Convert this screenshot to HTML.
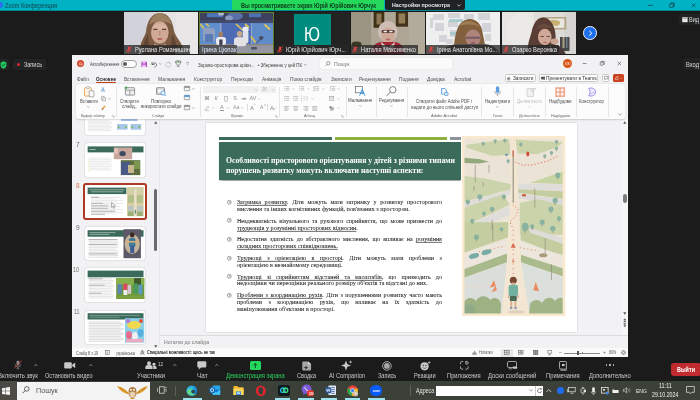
<!DOCTYPE html>
<html lang="uk">
<head>
<meta charset="utf-8">
<title>Zoom Конференция</title>
<style>
*{box-sizing:border-box;margin:0;padding:0}
html,body{width:700px;height:400px;overflow:hidden;background:#1b1b1b}
body{font-family:"Liberation Sans",sans-serif;color:#222;-webkit-font-smoothing:antialiased}
#root{position:absolute;left:-10px;top:-10px;width:720px;height:420px;overflow:hidden;background:#1b1b1b;filter:blur(.38px)}
#in{position:absolute;left:10px;top:10px;width:700px;height:400px}
.a{position:absolute}
.t{position:absolute;white-space:nowrap;line-height:1;transform-origin:0 0}
svg{position:absolute;overflow:visible}

/* zoom title bar */
#ztb{left:-10px;top:-10px;width:720px;height:20.8px;background:#00b2c3;box-shadow:inset 0 -.8px 0 rgba(0,60,70,.5)}
#zban{left:232.3px;top:-10px;width:152.2px;height:20.1px;background:#23d85a}
#zset{left:384.5px;top:-10px;width:80.5px;height:20px;background:#1f2326;border-radius:0 0 2px 2px}

/* video thumbs */
.vt{position:absolute;top:12px;height:42px;overflow:hidden;background:#222}
.vl{position:absolute;left:0;bottom:0;height:9px;background:rgba(30,30,30,.72);color:#e9e9e9;font-size:6.3px;line-height:9px;white-space:nowrap;padding:0 2px 0 2px}
.vl.m{padding-left:10px}
.mic{position:absolute;left:2.5px;bottom:1.5px;width:5px;height:6px}

/* powerpoint */
#ppt{left:72px;top:55px;width:556px;height:302px;background:#f2f1f3;overflow:hidden}
#ppt .t{color:#3a3a3a}
.tab{position:absolute;top:20.4px;font-size:5.6px;line-height:6px;color:#444;white-space:nowrap}
#rib{left:3.5px;top:29px;width:549.5px;height:35px;background:#fcfcfd;border-radius:2.5px;box-shadow:0 .5px 1.5px rgba(0,0,0,.22)}
.rl{position:absolute;font-size:4.6px;line-height:5.6px;color:#555;white-space:nowrap;text-align:center}
.gl{position:absolute;top:29.5px;font-size:4.1px;line-height:5px;color:#666;white-space:nowrap;text-align:center}
.sep{position:absolute;top:3px;width:.6px;height:29px;background:#dcdcdc}
.th{position:absolute;left:13px;width:60px;background:#fff;border-radius:1.5px;box-shadow:0 0 1.2px rgba(0,0,0,.4);overflow:hidden}
.sn{position:absolute;font-size:5.6px;line-height:6px;color:#555;text-align:right;width:10px;left:-1px}

/* slide */
#slide{left:134px;top:68px;width:371px;height:209px;background:#fff;box-shadow:0 0 1.5px rgba(0,0,0,.25);overflow:hidden}
#slide p{position:absolute;left:30.8px;width:205px;font-family:"Liberation Serif",serif;font-size:6.05px;line-height:6.9px;color:#333;text-align:justify}
#slide p u{text-decoration-thickness:.5px;text-underline-offset:.6px}
.bu{position:absolute;left:20.6px;width:4.2px;height:4.2px;border:.7px solid #666;border-radius:50%}
.bu:after{content:"";position:absolute;left:.7px;top:.5px;width:1.4px;height:1.4px;border-left:.5px solid #666;border-bottom:.5px solid #666}

.bl{font-family:"Liberation Serif",serif;font-size:6.05px;line-height:6.9px;color:#2e2e2e;white-space:nowrap;text-align:justify}
svg.tx{pointer-events:none}
svg.tx text{font-family:"Liberation Sans",sans-serif;white-space:pre}
/* zoom toolbar */
#ztool{left:0;top:357px;width:700px;height:24px;background:#1b1b1b}
.zl{position:absolute;top:16.2px;font-size:6.3px;line-height:7px;color:#d6d6d6;white-space:nowrap;transform:translateX(-50%)}
.car{position:absolute;top:5.5px;width:3.6px;height:3.6px;border-left:.8px solid #bdbdbd;border-top:.8px solid #bdbdbd;transform:rotate(45deg)}

/* taskbar */
#task{left:0;top:381px;width:700px;height:19px;background:#3b4038}
.run{position:absolute;top:17.4px;height:1.6px;background:#9fe3ee}
</style>
</head>
<body>
<div id="root"><div id="in">

<!-- Zoom title bar -->
<div class="a" id="ztb"></div>
<div class="a" style="left:-2.8px;top:2.2px;width:6.2px;height:6.2px;border-radius:50%;background:#2d6cf0"></div>
<svg class="a tx" style="left:4.6px;top:-4.50px" width="52" height="19.8"><text x="0" y="11.95" font-size="6.6" textLength="52" lengthAdjust="spacingAndGlyphs" style="fill:#123f46">Zoom Конференция</text></svg>
<div class="a" id="zban"></div>
<svg class="a tx" style="left:241px;top:-4.30px" width="135" height="19.2"><text x="0" y="11.58" font-size="6.4" textLength="135" lengthAdjust="spacingAndGlyphs" style="font-weight:bold;fill:#0f3d20">Вы просматриваете экран Юрій Юрійович Юрчук</text></svg>
<div class="a" id="zset"></div>
<svg class="a tx" style="left:391.6px;top:-4.00px" width="58" height="18.6"><text x="0" y="11.22" font-size="6.2" textLength="58" lengthAdjust="spacingAndGlyphs" style="font-weight:bold;fill:#e8e8e8">Настройки просмотра</text></svg>
<svg class="a" style="left:456.5px;top:3.6px" width="4" height="3" viewBox="0 0 4 3"><path d="M.4.6 2 2.2 3.6.6" fill="none" stroke="#ddd" stroke-width=".8"/></svg>
<svg class="a" style="left:646px;top:2px" width="52" height="7" viewBox="0 0 52 7"><g fill="none" stroke="#0e4a52" stroke-width=".8"><path d="M2 3.4h5"/><rect x="23.6" y="1.9" width="3.6" height="3.6" rx=".5"/><path d="M24.8 1.9V1h3.4v3.4h-1"/><path d="M45.8 1.6l3.6 3.6M49.4 1.6l-3.6 3.6"/></g></svg>


<svg width="0" height="0" style="position:absolute"><defs>
<filter id="b1" x="-20%" y="-20%" width="140%" height="140%"><feGaussianBlur stdDeviation=".6"/></filter>
<filter id="b2" x="-20%" y="-20%" width="140%" height="140%"><feGaussianBlur stdDeviation="0.55"/></filter>
<filter id="b3" x="-20%" y="-20%" width="140%" height="140%"><feGaussianBlur stdDeviation="2"/></filter>
<symbol id="mic" viewBox="0 0 6 7"><rect x="2" y=".5" width="2" height="3.700" rx="1" fill="#e2463e"/><path d="M.9 3.300a2.100 2.100 0 0 0 4.200 0M3 5.400v1.200" fill="none" stroke="#e2463e" stroke-width=".7"/><path d="M.5 6.500 5.500.5" stroke="#e2463e" stroke-width=".9"/></symbol>
</defs></svg>
<div class="vt" style="left:124.2px;width:74px;background:#dcdadc;"><svg width="74" height="42" viewBox="0 0 74 42"><rect width="74" height="42" fill="#d6d5dc"/><rect x="34" width="40" height="42" fill="#e5e3e5"/>
<g filter="url(#b1)"><rect x="0" y="0" width="22" height="42" fill="#d2d2da"/><rect x="52" y="0" width="22" height="42" fill="#e8e6e7"/>
<path d="M17 37c-2-6 3-10 5-17 1-10 5-19 14-19s13 9 14 18c2 7 8 11 9 18z" fill="#7a5a40"/>
<path d="M19 36c0-5 3-9 5-14l1 14zM53 36c0-5-3-9-5-14l-1 14z" fill="#5e4430"/>
<path d="M25 13c2-9 8-12 11-12s10 3 12 12c-6-5-17-5-23 0z" fill="#9c7e60"/>
<ellipse cx="35.800" cy="20.500" rx="8.800" ry="11.300" fill="#cfa896"/>
<ellipse cx="35.800" cy="15" rx="7" ry="3" fill="#d8b4a2"/>
<path d="M29.500 17.300h4M38 17.300h4" stroke="#5a4038" stroke-width="1.200"/>
<path d="M35.800 19v4.500" stroke="#b88c7c" stroke-width="1.200"/>
<ellipse cx="35.800" cy="27" rx="2.800" ry="1" fill="#b0605c"/>
<path d="M30 31c3 2.500 9 2.500 12 0v4H30z" fill="#b48c7c"/>
<path d="M18 43c2-7 8-9 17-9s15 2 17 9z" fill="#5c463c"/></g></svg><div class="a" style="left:0;bottom:0;height:9.200px;width:66.3px;background:rgba(40,40,40,.78)"></div><svg class="a" style="left:1.700px;top:33.700px" width="6" height="7" viewBox="0 0 6 7"><use href="#mic"/></svg><svg class="a tx" style="left:10.6px;top:28.30px" width="55" height="19.8"><text x="0" y="11.95" font-size="6.6" textLength="55" lengthAdjust="spacingAndGlyphs" style="fill:#e8e8e8">Руслана Романишин</text></svg></div>
<div class="vt" style="left:199.2px;width:75px;background:#456fb4;"><svg width="75" height="42" viewBox="0 0 75 42"><rect width="75" height="42" fill="#4672b6"/>
<g filter="url(#b2)"><rect x="0" y="0" width="75" height="10.800" fill="#252a48"/>
<rect x="8" y="1.200" width="16" height="4" fill="#3866b0"/><rect x="50" y="1.200" width="12" height="4" fill="#3b62aa"/><ellipse cx="36" cy="4" rx="8" ry="4" fill="#46609c"/><ellipse cx="30" cy="6" rx="4" ry="2.500" fill="#7f92bc"/><ellipse cx="22" cy="2" rx="3" ry="1.500" fill="#aab4cc"/>
<rect x="0" y="8.200" width="75" height="2.600" fill="#30365a"/>
<rect x="0" y="11.200" width="20.800" height="22" fill="#4e86ca"/><rect x="22.400" y="11.200" width="29.500" height="22" fill="#3a5cae"/><rect x="53" y="11.200" width="22" height="22" fill="#4f80c4"/><rect x="20.800" y="11.200" width="1.600" height="22" fill="#8a9ccc"/><rect x="51.900" y="11.200" width="1.100" height="22" fill="#8a9ccc"/>
<path d="M1 12l4 4.500M7 11.500l3 3M37 12l6.500 6M46 12l4 3.500M52 24.500l4.500 6M65.500 12.500l5.500 5" stroke="#e4c43a" stroke-width="1.700"/>
<rect x="4" y="16" width="12" height="14" rx="3" fill="#8799b8"/><rect x="6" y="22" width="8" height="8" fill="#4a6cb0"/>
<ellipse cx="46.500" cy="17.500" rx="3.200" ry="3" fill="#eef2f6"/><rect x="43.800" y="19" width="5.600" height="12" rx="1.500" fill="#e2e8f0"/>
<ellipse cx="62" cy="26" rx="2" ry="2" fill="#30344c"/><path d="M57 31 65 25" stroke="#3a3e58" stroke-width="1"/>
<rect x="0" y="32" width="75" height="10" fill="#857b75"/><rect x="36" y="33.500" width="39" height="8.500" fill="#8c8d98"/>
<ellipse cx="21.800" cy="22.400" rx="2.300" ry="2.800" fill="#9a7254"/><rect x="17" y="25" width="10" height="8" rx="2.500" fill="#eceef2"/><rect x="20.300" y="27.500" width="3.200" height="5.500" fill="#26283a"/>
<ellipse cx="40.600" cy="22" rx="2.800" ry="3" fill="#c8a27e"/><rect x="35" y="25.300" width="12.500" height="9" rx="3" fill="#e9e5e6"/>
<rect x="52" y="35" width="6" height="2.400" rx="1" fill="#343c58"/></g>
<rect width="75" height="42" fill="#c8d0e0" opacity=".14"/><rect x=".5" y=".5" width="74" height="41" fill="none" stroke="#657e2c" stroke-width="1"/></svg><div class="a" style="left:0;bottom:0;height:9.200px;width:38.2px;background:rgba(70,72,78,.8)"></div><svg class="a tx" style="left:2.4px;top:28.30px" width="34.5" height="19.8"><text x="0" y="11.95" font-size="6.6" textLength="34.5" lengthAdjust="spacingAndGlyphs" style="fill:#d8e2f4">Ірина Цюпак</text></svg></div>
<div class="vt" style="left:275.400px;width:74.600px;background:#232323"><div class="a" style="left:18.400px;top:2.400px;width:37.200px;height:30.600px;background:#008c7e"></div><svg class="a tx" style="left:28.9px;top:-8.90px" width="41.6" height="62.4"><text x="0" y="37.65" font-size="20.8" textLength="16" lengthAdjust="spacingAndGlyphs" style="fill:#fff">Ю</text></svg><div class="a" style="left:0;bottom:0;height:9.200px;width:74.6px;background:#262626"></div><svg class="a" style="left:1.700px;top:33.700px" width="6" height="7" viewBox="0 0 6 7"><use href="#mic"/></svg><svg class="a tx" style="left:10.6px;top:28.30px" width="60" height="19.8"><text x="0" y="11.95" font-size="6.6" textLength="60" lengthAdjust="spacingAndGlyphs" style="fill:#e8e8e8">Юрій Юрійович Юрч...</text></svg></div>
<div class="vt" style="left:350.8px;width:74.2px;background:#a89f8f;"><svg width="74.2" height="42" viewBox="0 0 74.2 42"><rect width="75" height="42" fill="#aea594"/>
<g filter="url(#b1)"><rect x="0" y="0" width="20" height="42" fill="#9c9483"/><rect x="58" y="0" width="17" height="42" fill="#b2aa9a"/>
<rect x="22.600" y="-1" width="10.700" height="16.800" fill="#3e3018"/><rect x="25.500" y="1.500" width="5" height="11" fill="#8c7652"/>
<rect x="44.800" y="-1" width="12.200" height="15.700" fill="#40321c"/><rect x="47.600" y="1.500" width="6.600" height="10" fill="#947e58"/>
<ellipse cx="36.700" cy="19.500" rx="9.800" ry="10.600" fill="#cdbdb4"/><ellipse cx="37" cy="23.600" rx="6.600" ry="8" fill="#cfa89a"/><ellipse cx="37" cy="27.500" rx="2.400" ry=".9" fill="#b46a68"/>
<rect x="30.600" y="18" width="13" height="3" rx="1.300" fill="#563c34"/><rect x="32.600" y="18.700" width="3.300" height="1.600" fill="#f2eeea"/><rect x="38.300" y="18.700" width="3.300" height="1.600" fill="#f2eeea"/>
<path d="M19 43c1-9 6-13 12-13h12c6 0 10 4 11 13z" fill="#a42832"/><path d="M30 30l7 5.500 7-5.500-2 8h-10z" fill="#dcd8d4"/>
<ellipse cx="5.500" cy="32" rx="5" ry="2.600" fill="#3a3822"/></g></svg><div class="a" style="left:0;bottom:0;height:9.200px;width:67px;background:rgba(40,40,40,.78)"></div><svg class="a" style="left:1.700px;top:33.700px" width="6" height="7" viewBox="0 0 6 7"><use href="#mic"/></svg><svg class="a tx" style="left:10.6px;top:28.30px" width="55" height="19.8"><text x="0" y="11.95" font-size="6.6" textLength="55" lengthAdjust="spacingAndGlyphs" style="fill:#e8e8e8">Наталія Максименко</text></svg></div>
<div class="vt" style="left:426.2px;width:74px;background:#ededee;"><svg width="74" height="42" viewBox="0 0 74 42"><rect width="74" height="42" fill="#efeff0"/>
<g filter="url(#b1)"><path d="M7 2h11v6H7zM22 1h12v5H22zM38 2h10v5H38zM52 1h12v7H52zM9 11h9v8H9zM22 9h10v6H22zM56 11h9v9h-9zM13 23h8v7h-8zM24 18h9v7h-9zM59 22h6v7h-6zM20 27h7v5h-7zM4 6h3v10H4z" fill="#bfc2c6" opacity=".6"/>
<path d="M23 7h14v3H23zM24 20h12v3H24z" fill="#9fc4c8" opacity=".8"/>
<path d="M28 36c0-7 1-12 3-18 2-7 7-11 13-11s11 5 12 11c1 6 3 11 3 18z" fill="#82603c"/>
<path d="M33 14c3-6 15-7 21 1-6-3-14-3-21-1z" fill="#a07e54"/>
<ellipse cx="47" cy="26" rx="7.600" ry="8.500" fill="#ad837c"/><rect x="39.500" y="24.800" width="15" height="2" rx="1" fill="#6a5460" opacity=".85"/><ellipse cx="47" cy="31" rx="2.400" ry=".9" fill="#9a5c60"/>
<path d="M14 43c2-8 12-11 20-11h24c7 0 14 4 16 11z" fill="#565250"/></g></svg><div class="a" style="left:0;bottom:0;height:9.200px;width:74px;background:rgba(40,40,40,.78)"></div><svg class="a" style="left:1.700px;top:33.700px" width="6" height="7" viewBox="0 0 6 7"><use href="#mic"/></svg><svg class="a tx" style="left:10.6px;top:28.30px" width="60" height="19.8"><text x="0" y="11.95" font-size="6.6" textLength="60" lengthAdjust="spacingAndGlyphs" style="fill:#e8e8e8">Ірина Анатоліївна Мо...</text></svg></div>
<div class="vt" style="left:501.8px;width:74px;background:#e0dedb;"><svg width="74" height="42" viewBox="0 0 74 42"><rect width="74" height="42" fill="#dedcd8"/>
<g filter="url(#b1)"><rect x="0" y="0" width="32" height="42" fill="#e8e6e3"/><ellipse cx="19" cy="18" rx="15" ry="17" fill="#eceae7"/><rect x="62" y="0" width="12" height="42" fill="#d6d4d0"/>
<rect x="40.300" y="5" width="24" height="12.500" fill="#b6a688"/><rect x="42.300" y="6.600" width="20" height="9.300" fill="#e8e6e0"/><path d="M47 9c2-1.500 7-1.500 10 0 2 1 1 4-2 5-3 0-5-2-8-3z" fill="#c8b070"/>
<rect x="58" y="25" width="9.500" height="14" fill="#46464a"/><rect x="60.500" y="25" width="2" height="11" fill="#a8a480"/><rect x="64" y="25" width="1.500" height="11" fill="#6c7c8c"/>
<path d="M26 36c0-7 3-12 4-18 2-8 6-12.500 11-12.500s9 4 11 10c2 5 2 12 1 18z" fill="#5a3e34"/>
<ellipse cx="42.800" cy="25" rx="6.800" ry="8.300" fill="#cfa898"/><path d="M38.500 24.500h3.400M44.500 24.500h3.400" stroke="#6a4a40" stroke-width="1"/><ellipse cx="43" cy="30.500" rx="2" ry=".8" fill="#b46c68"/><path d="M34 17c3-6 12-7 17-1-5 0-11 0-17 1z" fill="#684a3c"/>
<ellipse cx="52.500" cy="29.500" rx="4" ry="3" fill="#c9a292"/>
<path d="M20 43c2-7 8-10 14-10h18c6 0 10 4 12 10z" fill="#4a3838"/></g></svg><div class="a" style="left:0;bottom:0;height:9.200px;width:57px;background:rgba(40,40,40,.78)"></div><svg class="a" style="left:1.700px;top:33.700px" width="6" height="7" viewBox="0 0 6 7"><use href="#mic"/></svg><svg class="a tx" style="left:10.6px;top:28.30px" width="45" height="19.8"><text x="0" y="11.95" font-size="6.6" textLength="45" lengthAdjust="spacingAndGlyphs" style="fill:#e8e8e8">Озарко Вероніка</text></svg></div>
<div class="a" style="left:583.200px;top:26.300px;width:13.600px;height:13.600px;border-radius:50%;background:#1f70ee;border:1.100px solid #f4f4f4"></div>
<svg class="a" style="left:588px;top:30px" width="5" height="7" viewBox="0 0 5 7"><path d="M1.300.9 3.800 3.300 1.300 5.700" fill="none" stroke="#fff" stroke-width="1"/></svg>

<div class="a" style="left:-3px;top:58.6px;width:12.2px;height:11.6px;border-radius:2.5px;background:#232425"></div><!-- shieldbg -->
<!-- left: shield + record -->
<svg class="a" style="left:.2px;top:60.8px" width="7" height="8" viewBox="0 0 7 8"><path d="M3.5.3 6.4 1.4v2.8c0 1.7-1.2 2.9-2.9 3.5C1.800 7.100.6 5.900.6 4.200V1.400z" fill="#22c55e"/><path d="M2.100 3.900l1 1 1.800-2" fill="none" stroke="#0b3d1e" stroke-width=".8"/></svg>
<div class="a" style="left:13.2px;top:58.6px;width:32.6px;height:11.6px;border-radius:2.5px;background:#222324"></div>
<div class="a" style="left:16.6px;top:62.6px;width:3.8px;height:3.8px;border-radius:50%;background:#e2262c"></div>
<svg class="a tx" style="left:24.2px;top:55.00px" width="18" height="19.2"><text x="0" y="11.58" font-size="6.4" textLength="18" lengthAdjust="spacingAndGlyphs" style="fill:#dcdcdc">Запись</text></svg>
<!-- right: view + enter -->
<div class="a" style="left:678.5px;top:13.5px;width:24px;height:11.5px;border-radius:2px;background:#222324"></div>
<svg class="a" style="left:681.6px;top:16.8px" width="6" height="6" viewBox="0 0 6 6"><rect x=".2" y=".2" width="5.4" height="5" fill="#e8e8e8"/><path d="M.2 1.600h5.400M2 .2v1.400M3.800.2v1.400" stroke="#666" stroke-width=".4"/></svg>
<svg class="a tx" style="left:689px;top:10.00px" width="12.8" height="19.2"><text x="0" y="11.58" font-size="6.4" textLength="10" lengthAdjust="spacingAndGlyphs" style="fill:#dcdcdc">Вид</text></svg>
<div class="a" style="left:683px;top:58.4px;width:20px;height:12px;border-radius:2px;background:#212223"></div>
<svg class="a tx" style="left:686px;top:54.80px" width="13" height="19.2"><text x="0" y="11.58" font-size="6.4" textLength="13" lengthAdjust="spacingAndGlyphs" style="fill:#dcdcdc">Вход</text></svg>


<div class="a" id="ppt"><div class="a" style="left:-72px;top:-55px;width:700px;height:400px">
<div class="a" style="left:159.2px;top:119.5px;width:0.6px;height:228px;background:#e8e7e9;"></div>
<div class="a" style="left:84.6px;top:112px;width:60.5px;height:23px;background:#fff;border-radius:2px;box-shadow:0 0 1.3px rgba(0,0,0,.35)"></div>
<svg class="a" style="left:84.6px;top:112px;" width="60.5" height="23" viewBox="0 0 60.5 23"><rect x="36" y="6.400" width="16.500" height="2.600" fill="#a4c4e8"/><rect x="32" y="12" width="10.600" height="5.700" fill="#a8c6e6"/><rect x="45.600" y="12" width="10.600" height="5.700" fill="#a8c6e6"/><rect x="33" y="14" width="1.400" height="2" fill="#7ab850"/><rect x="40" y="14" width="1.400" height="2" fill="#7ab850"/><rect x="46.600" y="14" width="1.400" height="2" fill="#7ab850"/><rect x="53.600" y="14" width="1.400" height="2" fill="#7ab850"/><path d="M3 9h22.08" stroke="#dcdcdc" stroke-width="0.6"/><path d="M3 10.4h24" stroke="#dcdcdc" stroke-width="0.6"/><path d="M3 11.8h24" stroke="#dcdcdc" stroke-width="0.6"/><path d="M3 13.2h22.08" stroke="#dcdcdc" stroke-width="0.6"/><path d="M3 14.6h24" stroke="#dcdcdc" stroke-width="0.6"/><path d="M3 16h24" stroke="#dcdcdc" stroke-width="0.6"/><path d="M3 17.4h22.08" stroke="#dcdcdc" stroke-width="0.6"/><path d="M3 18.8h24" stroke="#dcdcdc" stroke-width="0.6"/></svg>
<svg class="a tx" style="left:75.8px;top:134.65px" width="13" height="19.5"><text x="0" y="11.77" font-size="6.5" style="fill:#6c6c6c">7</text></svg>
<div class="a" style="left:84.6px;top:142.6px;width:60.5px;height:34.7px;background:#fff;border-radius:2px;box-shadow:0 0 1.3px rgba(0,0,0,.35)"></div>
<svg class="a" style="left:84.6px;top:142.6px;" width="60.5" height="34.7" viewBox="0 0 60.5 34.7"><g filter="url(#b2)"><rect x="2.600" y="3.400" width="55.900" height="6" fill="#3b6b5b"/><rect x="28.800" y="4.500" width="18.400" height="11.700" fill="#c9a69c"/><ellipse cx="37.600" cy="10.500" rx="3.200" ry="2.600" fill="#3a4c60"/><ellipse cx="31" cy="8" rx="2" ry="3" fill="#e6c2b8"/><rect x="35.800" y="17.200" width="19.500" height="14.900" fill="#5b6e3c"/><rect x="36" y="19" width="9" height="13" fill="#4a5a86"/><rect x="43" y="22" width="6" height="8" fill="#c8b890"/><rect x="49" y="18" width="6" height="8" fill="#7a9650"/></g><path d="M5 15h20.24" stroke="#dadada" stroke-width="0.6"/><path d="M5 16.7h22" stroke="#dadada" stroke-width="0.6"/><path d="M5 18.4h22" stroke="#dadada" stroke-width="0.6"/><path d="M5 20.1h20.24" stroke="#dadada" stroke-width="0.6"/><path d="M5 21.8h22" stroke="#dadada" stroke-width="0.6"/><path d="M5 23.5h22" stroke="#dadada" stroke-width="0.6"/><path d="M5 25.2h20.24" stroke="#dadada" stroke-width="0.6"/><path d="M5 26.9h22" stroke="#dadada" stroke-width="0.6"/><path d="M4 15v14" stroke="#d8d8a0" stroke-width=".5"/><path d="M4.600 6.500h6" stroke="#cfe0d8" stroke-width=".7"/></svg>
<svg class="a tx" style="left:75.8px;top:176.25px" width="13" height="19.5"><text x="0" y="11.77" font-size="6.5" style="fill:#de7a58">8</text></svg>
<div class="a" style="left:83px;top:183.2px;width:64.2px;height:37.2px;background:#fff;border:2px solid #ad3a24;border-radius:3px"></div>
<svg class="a" style="left:84.6px;top:184.8px;" width="60.5" height="33.8" viewBox="0 0 60.5 33.8"><g filter="url(#b2)"><rect x="2.600" y="2.600" width="38.800" height="6.500" fill="#3b6b5b"/><rect x="42" y="2" width="16.700" height="29.200" fill="#d9cda4"/><rect x="43" y="3" width="14.700" height="5" fill="#cfd2a4"/><rect x="43" y="10" width="6" height="8" fill="#b4c08a"/><rect x="51" y="10" width="6.700" height="8" fill="#b4c08a"/><rect x="43" y="21" width="5.500" height="5" fill="#b9c4c4"/><rect x="52" y="21" width="5.700" height="5" fill="#b9c4c4"/><rect x="43" y="26.500" width="5.500" height="4.500" fill="#9aae78"/><rect x="52" y="26.500" width="5.700" height="4.500" fill="#9aae78"/><rect x="49.200" y="4" width="2.400" height="27" fill="#eadfc8"/><rect x="49.800" y="25" width="1.300" height="3.600" fill="#5f8f80"/></g><path d="M4.500 4.800h35M6 6.800h32" stroke="#c8dcd2" stroke-width=".6"/><path d="M6 12.3h29.44" stroke="#d4d4d4" stroke-width="0.6"/><path d="M6 15.3h32" stroke="#d4d4d4" stroke-width="0.6"/><path d="M6 18.3h32" stroke="#d4d4d4" stroke-width="0.6"/><path d="M6 21.3h29.44" stroke="#d4d4d4" stroke-width="0.6"/><path d="M6 24.3h32" stroke="#d4d4d4" stroke-width="0.6"/><path d="M6 27.3h32" stroke="#d4d4d4" stroke-width="0.6"/><path d="M6 13.8h23.92" stroke="#dadada" stroke-width="0.5"/><path d="M6 16.8h26" stroke="#dadada" stroke-width="0.5"/><path d="M6 19.8h26" stroke="#dadada" stroke-width="0.5"/><path d="M6 22.8h23.92" stroke="#dadada" stroke-width="0.5"/><path d="M6 25.8h26" stroke="#dadada" stroke-width="0.5"/><path d="M6 28.8h26" stroke="#dadada" stroke-width="0.5"/><path d="M6 12.300h8M6 18.300h12M6 20.800h17M6 23.300h17M6 26.300h24M6 29.300h14" stroke="#8a8a8a" stroke-width=".6"/><path d="M26.600 17.400v5l1.200-1 .9 1.900.8-.4-.9-1.800 1.600-.2z" fill="#fff" stroke="#444" stroke-width=".4"/></svg>
<svg class="a tx" style="left:75.8px;top:218.25px" width="13" height="19.5"><text x="0" y="11.77" font-size="6.5" style="fill:#6c6c6c">9</text></svg>
<div class="a" style="left:84.6px;top:226.5px;width:60.5px;height:33.8px;background:#fff;border-radius:2px;box-shadow:0 0 1.3px rgba(0,0,0,.35)"></div>
<svg class="a" style="left:84.6px;top:226.5px;" width="60.5" height="33.8" viewBox="0 0 60.5 33.8"><g filter="url(#b2)"><rect x="2.600" y="3.200" width="55.900" height="6.500" fill="#3b6b5b"/><rect x="38.500" y="2.200" width="17.400" height="29" fill="#5c5a66"/><ellipse cx="47.200" cy="17" rx="7.600" ry="10" fill="#c4b49c"/><rect x="44" y="11" width="6.400" height="9" rx="1.500" fill="#3f7a9a"/><ellipse cx="47.200" cy="8" rx="2.400" ry="2.400" fill="#3a2a22"/><rect x="45.200" y="19" width="4" height="7" fill="#3c5c98"/><rect x="40" y="14" width="14" height="1.600" fill="#d8b070"/></g><path d="M4.500 5.600h26M4.500 7.400h20" stroke="#c8dcd2" stroke-width=".6"/><path d="M3.6 12.6h27.6" stroke="#d0d0d0" stroke-width="0.6"/><path d="M3.6 14.2h30" stroke="#d0d0d0" stroke-width="0.6"/><path d="M3.6 15.8h30" stroke="#d0d0d0" stroke-width="0.6"/><path d="M3.6 17.4h27.6" stroke="#d0d0d0" stroke-width="0.6"/><path d="M3.6 19h30" stroke="#d0d0d0" stroke-width="0.6"/><path d="M3.6 20.6h30" stroke="#d0d0d0" stroke-width="0.6"/><path d="M3.6 22.2h27.6" stroke="#d0d0d0" stroke-width="0.6"/><path d="M3.6 23.8h30" stroke="#d0d0d0" stroke-width="0.6"/><path d="M3.6 25.4h30" stroke="#d0d0d0" stroke-width="0.6"/><path d="M3.6 27h27.6" stroke="#d0d0d0" stroke-width="0.6"/><path d="M3.6 28.6h30" stroke="#d0d0d0" stroke-width="0.6"/><path d="M3.6 30.2h30" stroke="#d0d0d0" stroke-width="0.6"/><path d="M3.600 12.600h29M3.600 17.400h29M3.600 26.900h29" stroke="#8c8c8c" stroke-width=".6"/></svg>
<svg class="a tx" style="left:73.2px;top:260.25px" width="13" height="19.5"><text x="0" y="11.77" font-size="6.5" textLength="6" lengthAdjust="spacingAndGlyphs" style="fill:#6c6c6c">10</text></svg>
<div class="a" style="left:84.6px;top:267.9px;width:60.5px;height:34.1px;background:#fff;border-radius:2px;box-shadow:0 0 1.3px rgba(0,0,0,.35)"></div>
<svg class="a" style="left:84.6px;top:267.9px;" width="60.5" height="34.1" viewBox="0 0 60.5 34.1"><g filter="url(#b2)"><rect x="2.600" y="2.600" width="55.900" height="6.700" fill="#3b6b5b"/><rect x="31.200" y="10.100" width="28.100" height="20.800" fill="#6d9a3c"/><rect x="31.200" y="10.100" width="28.100" height="7" fill="#86b04c"/><rect x="49" y="10.100" width="7" height="7" fill="#3f5c2c"/><rect x="32.500" y="16" width="4.400" height="10" rx="1" fill="#5c86b0"/><rect x="38.400" y="15.500" width="4" height="7" rx="1" fill="#e04860"/><rect x="38.400" y="22" width="4" height="5" fill="#f0f0f0"/><rect x="42.600" y="17" width="3.600" height="9" rx="1" fill="#d8c4d0"/><rect x="48.500" y="15.500" width="4.400" height="10" rx="1" fill="#4a9a5c"/><rect x="53.400" y="16.500" width="4" height="10" rx="1" fill="#5c98c0"/><rect x="31.200" y="27.500" width="28.100" height="3.400" fill="#7aa040"/></g><path d="M3.6 10.8h23" stroke="#d4d4d4" stroke-width="0.6"/><path d="M3.6 12.4h25" stroke="#d4d4d4" stroke-width="0.6"/><path d="M3.6 14h25" stroke="#d4d4d4" stroke-width="0.6"/><path d="M3.6 15.6h23" stroke="#d4d4d4" stroke-width="0.6"/><path d="M3.6 17.2h25" stroke="#d4d4d4" stroke-width="0.6"/><path d="M3.6 18.8h25" stroke="#d4d4d4" stroke-width="0.6"/><path d="M3.6 20.4h23" stroke="#d4d4d4" stroke-width="0.6"/><path d="M3.6 22h25" stroke="#d4d4d4" stroke-width="0.6"/><path d="M3.6 23.6h25" stroke="#d4d4d4" stroke-width="0.6"/><path d="M3.6 25.2h23" stroke="#d4d4d4" stroke-width="0.6"/><path d="M3.6 26.8h25" stroke="#d4d4d4" stroke-width="0.6"/><path d="M3.6 28.4h25" stroke="#d4d4d4" stroke-width="0.6"/><path d="M3.6 30h23" stroke="#d4d4d4" stroke-width="0.6"/><path d="M3.600 10.800h14M3.600 17.200h16M3.600 25.200h13" stroke="#8c8c8c" stroke-width=".6"/></svg>
<svg class="a tx" style="left:73.6px;top:301.65px" width="13" height="19.5"><text x="0" y="11.77" font-size="6.5" textLength="5.4" lengthAdjust="spacingAndGlyphs" style="fill:#6c6c6c">11</text></svg>
<div class="a" style="left:84.6px;top:310.5px;width:60.5px;height:33.5px;background:#fff;border-radius:2px;box-shadow:0 0 1.3px rgba(0,0,0,.35)"></div>
<svg class="a" style="left:84.6px;top:310.5px;" width="60.5" height="33.5" viewBox="0 0 60.5 33.5"><g filter="url(#b2)"><rect x="2.600" y="2.200" width="55.900" height="6.300" fill="#3b6b5b"/><rect x="40" y="7.200" width="19.200" height="24.400" fill="#8cd0e8"/><ellipse cx="49" cy="14" rx="7" ry="4" fill="#f0d850"/><ellipse cx="44" cy="24" rx="3" ry="4" fill="#e86c8c"/><ellipse cx="50" cy="25" rx="3" ry="4" fill="#f0f0f4"/><ellipse cx="55.500" cy="22" rx="3" ry="4" fill="#58b0e0"/><ellipse cx="43" cy="10" rx="2.400" ry="2" fill="#b080d8"/><ellipse cx="56" cy="10" rx="2" ry="2" fill="#e05040"/><rect x="41" y="28" width="17" height="3.200" fill="#f0a8c0"/></g><path d="M4.500 4.500h50M4.500 6.200h30" stroke="#a8c4b8" stroke-width=".5"/><path d="M3.6 11h32.2" stroke="#c4c4c4" stroke-width="0.6"/><path d="M3.6 12.6h35" stroke="#c4c4c4" stroke-width="0.6"/><path d="M3.6 14.2h35" stroke="#c4c4c4" stroke-width="0.6"/><path d="M3.6 15.8h32.2" stroke="#c4c4c4" stroke-width="0.6"/><path d="M3.6 17.4h35" stroke="#c4c4c4" stroke-width="0.6"/><path d="M3.6 19h35" stroke="#c4c4c4" stroke-width="0.6"/><path d="M3.6 20.6h32.2" stroke="#c4c4c4" stroke-width="0.6"/><path d="M3.6 22.2h35" stroke="#c4c4c4" stroke-width="0.6"/><path d="M3.6 23.8h35" stroke="#c4c4c4" stroke-width="0.6"/><path d="M3.6 25.4h32.2" stroke="#c4c4c4" stroke-width="0.6"/><path d="M3.6 27h35" stroke="#c4c4c4" stroke-width="0.6"/><path d="M3.6 28.6h35" stroke="#c4c4c4" stroke-width="0.6"/><path d="M3.6 30.2h32.2" stroke="#c4c4c4" stroke-width="0.6"/></svg>
<svg class="a" style="left:153.6px;top:120.8px;" width="3.6" height="3" viewBox="0 0 3.6 3"><path d="M1.800.3 3.400 2.700H.2z" fill="#555"/></svg>
<svg class="a" style="left:153.6px;top:344.6px;" width="3.6" height="3" viewBox="0 0 3.6 3"><path d="M1.800 2.700 3.400.3H.2z" fill="#555"/></svg>
<div class="a" style="left:153.9px;top:189.4px;width:3.3px;height:61.2px;background:#6c6c70;border-radius:1.700px"></div>
<div class="a" style="left:622px;top:119.5px;width:6px;height:215px;background:#f6f5f7;"></div>
<svg class="a" style="left:623.2px;top:121px;" width="3.6" height="3" viewBox="0 0 3.6 3"><path d="M1.800.3 3.400 2.700H.2z" fill="#555"/></svg>
<div class="a" style="left:623px;top:193.8px;width:4px;height:9.4px;background:#7c7c7c;border-radius:2px"></div>
<svg class="a" style="left:623.2px;top:312px;" width="3.6" height="3" viewBox="0 0 3.6 3"><path d="M1.800 2.700 3.400.3H.2z" fill="#555"/></svg>
<svg class="a" style="left:623.2px;top:317.6px;" width="3.6" height="4.6" viewBox="0 0 3.6 4.6"><path d="M1.800.3 3.400 2.200H.2zM1.800 2.300 3.400 4.300H.2z" fill="#666"/></svg>
<svg class="a" style="left:623.2px;top:323.2px;" width="3.6" height="4.6" viewBox="0 0 3.6 4.6"><path d="M1.800 2.300 3.400.3H.2zM1.800 4.300 3.400 2.300H.2z" fill="#666"/></svg>
<div class="a" style="left:160px;top:334.6px;width:468px;height:0.6px;background:#dddcde;"></div>
<svg class="a tx" style="left:164px;top:333.40px" width="45" height="17.4"><text x="0" y="10.50" font-size="5.8" textLength="45" lengthAdjust="spacingAndGlyphs" style="fill:#777">Нотатки до слайда</text></svg>
<div class="a" style="left:72px;top:348px;width:556px;height:9px;background:#fafafa;"></div>
<svg class="a tx" style="left:76.2px;top:345.75px" width="22" height="14.1"><text x="0" y="8.51" font-size="4.7" textLength="22" lengthAdjust="spacingAndGlyphs" style="fill:#555">Слайд 8 з 19</text></svg>
<svg class="a" style="left:105px;top:350.4px;" width="4.6" height="4.6" viewBox="0 0 4.6 4.6"><rect x=".3" y=".3" width="4" height="4" fill="none" stroke="#555" stroke-width=".5"/><path d="M2.300.3v3.200l-.9-.8M2.300 3.500l.9-.8" fill="none" stroke="#555" stroke-width=".4"/></svg>
<svg class="a tx" style="left:116px;top:345.75px" width="19" height="14.1"><text x="0" y="8.51" font-size="4.7" textLength="19" lengthAdjust="spacingAndGlyphs" style="fill:#555">українська</text></svg>
<svg class="a" style="left:140.2px;top:350.2px;" width="4.8" height="5" viewBox="0 0 4.8 5"><circle cx="2.400" cy=".9" r=".7" fill="none" stroke="#333" stroke-width=".4"/><path d="M.4 1.900h4M1.200 1.900v1.400h2.400V1.900M1.200 3.300l-.6 1.500M3.600 3.300l.6 1.500M2.400 3.300v1.300" fill="none" stroke="#333" stroke-width=".45"/></svg>
<svg class="a tx" style="left:147px;top:345.45px" width="68" height="14.7"><text x="0" y="8.87" font-size="4.9" textLength="68" lengthAdjust="spacingAndGlyphs" style="fill:#222;font-weight:bold">Спеціальні можливості: щось не так</text></svg>
<svg class="a" style="left:471.6px;top:350px;" width="5" height="5" viewBox="0 0 5 5"><path d="M.3 4.500h4.400M.7 4.500V2.900h3.600v1.600M1.400 2.900 2.500.9 3.600 2.900" fill="#aaa" stroke="#777" stroke-width=".4"/></svg>
<svg class="a tx" style="left:479px;top:345.90px" width="13.5" height="13.8"><text x="0" y="8.33" font-size="4.6" textLength="13.5" lengthAdjust="spacingAndGlyphs" style="fill:#555">Нотатки</text></svg>
<div class="a" style="left:500.5px;top:348.6px;width:12.6px;height:8px;background:#e6e5e7;"></div>
<svg class="a" style="left:503.8px;top:350.2px;" width="5.4" height="5" viewBox="0 0 5.4 5"><rect x=".3" y=".3" width="4.800" height="4.200" fill="none" stroke="#555" stroke-width=".5"/><path d="M.3 2.400h4.800M2.700.3v4.200" stroke="#555" stroke-width=".4"/></svg>
<svg class="a" style="left:518.2px;top:350.2px;" width="5.4" height="5" viewBox="0 0 5.4 5"><g fill="none" stroke="#555" stroke-width=".5"><rect x=".3" y=".4" width="2" height="1.700"/><rect x="3.100" y=".4" width="2" height="1.700"/><rect x=".3" y="2.800" width="2" height="1.700"/><rect x="3.100" y="2.800" width="2" height="1.700"/></g></svg>
<svg class="a" style="left:532.6px;top:350.2px;" width="5.4" height="5" viewBox="0 0 5.4 5"><rect x=".5" y=".3" width="4.400" height="4.400" fill="#999" stroke="#555" stroke-width=".5"/><path d="M2.700.3v4.400" stroke="#555" stroke-width=".4"/></svg>
<svg class="a" style="left:546.8px;top:350px;" width="5.4" height="5.4" viewBox="0 0 5.4 5.4"><path d="M.3.500h4.800M.8.500v2.800h3.800V.5M2.700 3.300v1.500M1.400 4.900h2.600" fill="none" stroke="#555" stroke-width=".5"/></svg>
<svg class="a tx" style="left:558.8px;top:345.10px" width="10" height="15"><text x="0" y="9.05" font-size="5" style="fill:#666">–</text></svg>
<div class="a" style="left:564px;top:352.6px;width:36px;height:0.5px;background:#888;"></div>
<div class="a" style="left:577.4px;top:350.6px;width:1.3px;height:4.4px;background:#555;"></div>
<div class="a" style="left:581.8px;top:351.8px;width:0.5px;height:1.7px;background:#888;"></div>
<svg class="a tx" style="left:602.6px;top:345.20px" width="10" height="15"><text x="0" y="9.05" font-size="5" style="fill:#666">+</text></svg>
<svg class="a tx" style="left:609px;top:346.00px" width="9.2" height="13.8"><text x="0" y="8.33" font-size="4.6" textLength="7.2" lengthAdjust="spacingAndGlyphs" style="fill:#555">80%</text></svg>
<svg class="a" style="left:621px;top:350.2px;" width="5" height="5" viewBox="0 0 5 5"><rect x="1" y="1" width="3" height="3" fill="none" stroke="#555" stroke-width=".5"/><path d="M2.500 0v1.400M2.500 3.600V5M0 2.500h1.400M3.600 2.500H5" stroke="#555" stroke-width=".5"/></svg>
<div class="a" style="left:206px;top:123px;width:371px;height:209px;background:#fff;box-shadow:0 0 1.2px rgba(0,0,0,.3)"></div>
<div class="a" style="left:219px;top:137px;width:113px;height:3.4px;background:#3b6b5b;"></div>
<div class="a" style="left:334.5px;top:137px;width:112.5px;height:3.4px;background:#8db13c;"></div>
<div class="a" style="left:449.5px;top:137px;width:11.5px;height:3.4px;background:#8c939e;"></div>
<div class="a" style="left:219px;top:142px;width:242px;height:38px;background:#3b6b5b;box-shadow:0 .6px 1px rgba(0,0,0,.35)"></div>
<svg class="a tx" style="left:226.3px;top:149.20px" width="229" height="22.8"><text x="0" y="13.76" font-size="7.6" textLength="229" lengthAdjust="spacingAndGlyphs" style="fill:#fff;font-weight:bold;font-family:'Liberation Serif',serif">Особливості просторового орієнтування у дітей з різними типами</text></svg>
<svg class="a tx" style="left:226.3px;top:158.70px" width="197.4" height="22.8"><text x="0" y="13.76" font-size="7.6" textLength="197.4" lengthAdjust="spacingAndGlyphs" style="fill:#fff;font-weight:bold;font-family:'Liberation Serif',serif">порушень розвитку можуть включати наступні аспекти:</text></svg>
<svg class="a" style="left:226.6px;top:199.9px;" width="4.6" height="4.6" viewBox="0 0 4.6 4.6"><circle cx="2.300" cy="2.300" r="1.900" fill="#fff" stroke="#555" stroke-width=".55"/><path d="M2.300 1.100v1.300h1" fill="none" stroke="#555" stroke-width=".45"/></svg>
<svg class="a tx" style="left:236.8px;top:193.12px" width="205" height="18.15"><text x="0" y="10.95" font-size="6.05" style="font-family:'Liberation Serif',serif;fill:#202020;stroke:#202020;stroke-width:.04px;word-spacing:2.149px"><tspan style="text-decoration:underline;text-decoration-thickness:.35px;text-underline-offset:.3px">Затримка розвитку</tspan>. Діти можуть мати затримку у розвитку просторового</text></svg>
<svg class="a tx" style="left:236.8px;top:200.03px" width="172.8" height="18.15"><text x="0" y="10.95" font-size="6.05" textLength="172.8" lengthAdjust="spacingAndGlyphs" style="font-family:'Liberation Serif',serif;fill:#202020;stroke:#202020;stroke-width:.04px">мислення та інших когнітивних функцій, пов'язаних з простором.</text></svg>
<svg class="a" style="left:226.6px;top:218.4px;" width="4.6" height="4.6" viewBox="0 0 4.6 4.6"><circle cx="2.300" cy="2.300" r="1.900" fill="#fff" stroke="#555" stroke-width=".55"/><path d="M2.300 1.100v1.300h1" fill="none" stroke="#555" stroke-width=".45"/></svg>
<svg class="a tx" style="left:236.8px;top:211.62px" width="205" height="18.15"><text x="0" y="10.95" font-size="6.05" style="font-family:'Liberation Serif',serif;fill:#202020;stroke:#202020;stroke-width:.04px;word-spacing:1.353px">Неадекватність візуального та рухового сприйняття, що може призвести до</text></svg>
<svg class="a tx" style="left:236.8px;top:218.53px" width="120.9" height="18.15"><text x="0" y="10.95" font-size="6.05" textLength="120.9" lengthAdjust="spacingAndGlyphs" style="font-family:'Liberation Serif',serif;fill:#202020;stroke:#202020;stroke-width:.04px"><tspan style="text-decoration:underline;text-decoration-thickness:.35px;text-underline-offset:.3px">труднощів у розумінні просторових відносин</tspan>.</text></svg>
<svg class="a" style="left:226.6px;top:237.1px;" width="4.6" height="4.6" viewBox="0 0 4.6 4.6"><circle cx="2.300" cy="2.300" r="1.900" fill="#fff" stroke="#555" stroke-width=".55"/><path d="M2.300 1.100v1.300h1" fill="none" stroke="#555" stroke-width=".45"/></svg>
<svg class="a tx" style="left:236.8px;top:230.33px" width="205" height="18.15"><text x="0" y="10.95" font-size="6.05" style="font-family:'Liberation Serif',serif;fill:#202020;stroke:#202020;stroke-width:.04px;word-spacing:1.646px">Недостатня здатність до абстрактного мислення, що впливає на <tspan style="text-decoration:underline;text-decoration-thickness:.35px;text-underline-offset:.3px">розуміння</tspan></text></svg>
<svg class="a tx" style="left:236.8px;top:237.23px" width="100.9" height="18.15"><text x="0" y="10.95" font-size="6.05" textLength="100.9" lengthAdjust="spacingAndGlyphs" style="font-family:'Liberation Serif',serif;fill:#202020;stroke:#202020;stroke-width:.04px"><tspan style="text-decoration:underline;text-decoration-thickness:.35px;text-underline-offset:.3px">складних просторових співвідношень.</tspan></text></svg>
<svg class="a" style="left:226.6px;top:255.6px;" width="4.6" height="4.6" viewBox="0 0 4.6 4.6"><circle cx="2.300" cy="2.300" r="1.900" fill="#fff" stroke="#555" stroke-width=".55"/><path d="M2.300 1.100v1.300h1" fill="none" stroke="#555" stroke-width=".45"/></svg>
<svg class="a tx" style="left:236.8px;top:248.82px" width="205" height="18.15"><text x="0" y="10.95" font-size="6.05" style="font-family:'Liberation Serif',serif;fill:#202020;stroke:#202020;stroke-width:.04px;word-spacing:3.988px"><tspan style="text-decoration:underline;text-decoration-thickness:.35px;text-underline-offset:.3px">Труднощі з орієнтацією в просторі</tspan>. Діти можуть мати проблеми з</text></svg>
<svg class="a tx" style="left:236.8px;top:255.73px" width="105.5" height="18.15"><text x="0" y="10.95" font-size="6.05" textLength="105.5" lengthAdjust="spacingAndGlyphs" style="font-family:'Liberation Serif',serif;fill:#202020;stroke:#202020;stroke-width:.04px">орієнтацією в незнайомому середовищі.</text></svg>
<svg class="a" style="left:226.6px;top:274.3px;" width="4.6" height="4.6" viewBox="0 0 4.6 4.6"><circle cx="2.300" cy="2.300" r="1.900" fill="#fff" stroke="#555" stroke-width=".55"/><path d="M2.300 1.100v1.300h1" fill="none" stroke="#555" stroke-width=".45"/></svg>
<svg class="a tx" style="left:236.8px;top:267.53px" width="205" height="18.15"><text x="0" y="10.95" font-size="6.05" style="font-family:'Liberation Serif',serif;fill:#202020;stroke:#202020;stroke-width:.04px;word-spacing:3.644px"><tspan style="text-decoration:underline;text-decoration-thickness:.35px;text-underline-offset:.3px">Труднощі зі сприйняттям відстаней та масштабів</tspan>, що призводить до</text></svg>
<svg class="a tx" style="left:236.8px;top:274.43px" width="190.7" height="18.15"><text x="0" y="10.95" font-size="6.05" textLength="190.7" lengthAdjust="spacingAndGlyphs" style="font-family:'Liberation Serif',serif;fill:#202020;stroke:#202020;stroke-width:.04px">недооцінки чи переоцінки реального розміру об'єктів та відстані до них.</text></svg>
<svg class="a" style="left:226.6px;top:292.9px;" width="4.6" height="4.6" viewBox="0 0 4.6 4.6"><circle cx="2.300" cy="2.300" r="1.900" fill="#fff" stroke="#555" stroke-width=".55"/><path d="M2.300 1.100v1.300h1" fill="none" stroke="#555" stroke-width=".45"/></svg>
<svg class="a tx" style="left:236.8px;top:286.12px" width="205" height="18.15"><text x="0" y="10.95" font-size="6.05" style="font-family:'Liberation Serif',serif;fill:#202020;stroke:#202020;stroke-width:.04px;word-spacing:0.953px"><tspan style="text-decoration:underline;text-decoration-thickness:.35px;text-underline-offset:.3px">Проблеми з координацією рухів</tspan>. Діти з порушеннями розвитку часто мають</text></svg>
<svg class="a tx" style="left:236.8px;top:293.03px" width="205" height="18.15"><text x="0" y="10.95" font-size="6.05" style="font-family:'Liberation Serif',serif;fill:#202020;stroke:#202020;stroke-width:.04px;word-spacing:4.967px">проблеми з координацією рухів, що впливає на їх здатність до</text></svg>
<svg class="a tx" style="left:236.8px;top:299.93px" width="97.7" height="18.15"><text x="0" y="10.95" font-size="6.05" textLength="97.7" lengthAdjust="spacingAndGlyphs" style="font-family:'Liberation Serif',serif;fill:#202020;stroke:#202020;stroke-width:.04px">маніпулювання об'єктами в просторі.</text></svg>
<svg class="a" style="left:461.8px;top:136.3px;" width="103.2" height="180" viewBox="0 0 103.2 180"><defs><filter id="wb" x="-5%" y="-5%" width="110%" height="110%"><feGaussianBlur stdDeviation=".55"/></filter><clipPath id="ic"><rect x="2" y="2" width="99.200" height="176"/></clipPath></defs>
<rect width="103.200" height="180" fill="#f9e9cf"/>
<g clip-path="url(#ic)"><g filter="url(#wb)"><rect x="2.5" y="2.5" width="98.2" height="175" fill="#ece4d6"/><path d="M4.5 8.8 47.0 3.2 48.8 18.8 30.8 20.0 4.5 11.8 z" fill="#cad3aa"/><path d="M53.2 3.8 101.2 6.2 94.5 11.8 75.8 18.0 55.8 17.5 z" fill="#cad3aa"/><path d="M2.0 13.8 30.8 20.8 75.8 18.8 102.0 8.8 102.0 33.8 68.2 45.0 2.0 38.8 z" fill="#ebe3d6"/><path d="M2.0 21.8 18.2 23.2 27.0 25.8 17.0 27.5 2.0 27.0 z" fill="#93a97c"/><path d="M2.0 40.0 23.2 42.5 48.8 48.2 48.8 53.2 2.0 65.8 z" fill="#cad3aa"/><path d="M68.2 46.8 102.0 35.0 102.0 48.2 z" fill="#c8d4a4"/><path d="M53.2 47.5 102.0 48.2 102.0 55.2 53.2 53.2 z" fill="#dfddd9"/><path d="M56.2 53.2 102.0 55.5 102.0 63.0 56.2 56.8 z" fill="#c3cda0"/><path d="M2.0 66.2 48.8 53.8 48.8 58.2 2.0 71.8 z" fill="#dfddd9"/><path d="M2.0 71.8 41.2 58.2 47.5 68.8 2.0 90.8 z" fill="#cad3aa"/><path d="M57.0 57.5 102.0 63.8 102.0 70.0 57.0 62.5 z" fill="#dcdad8"/><path d="M57.8 66.8 75.8 63.2 102.0 69.5 102.0 98.8 57.8 98.8 z" fill="#cad3aa"/><path d="M2.0 91.8 46.2 70.0 53.2 76.2 2.0 98.8 z" fill="#dfddd9"/><path d="M2.0 86.2 46.2 86.2 46.2 101.2 2.0 116.7 z" fill="#c3cda0"/><path d="M58.8 93.7 68.2 92.5 102.0 104.2 102.0 119.2 58.8 106.7 z" fill="#c3cda0"/><path d="M65.8 91.2 102.0 102.5 102.0 108.2 68.2 96.7 z" fill="#dedcd8"/><path d="M2.0 118.2 47.0 103.2 56.2 103.2 102.0 120.7 102.0 131.7 58.8 118.7 45.8 117.5 2.0 133.2 z" fill="#ece6dc"/><path d="M2.0 133.2 45.0 117.5 45.0 126.2 2.0 141.7 z" fill="#a8ba8c"/><path d="M58.8 118.7 102.0 132.7 102.0 140.7 58.8 126.2 z" fill="#aabc8e"/><path d="M2.0 142.2 45.0 126.7 40.0 179.9 2.0 179.9 z" fill="#d9dedb"/><path d="M59.2 126.7 102.0 141.7 102.0 179.9 67.8 179.9 z" fill="#dbe0dd"/><path d="M2.0 149.9 38.2 145.7 38.2 148.2 2.0 153.2 z" fill="#e2dcd0" opacity="0.6"/><path d="M47.8 3.2 53.8 3.2 55.8 47.5 57.2 98.8 46.8 98.8 48.8 47.5 z" fill="#f2e6d2"/><path d="M46.8 88.7 57.2 88.7 59.0 126.2 67.5 179.9 39.5 179.9 44.8 126.2 z" fill="#f3e7d3"/><path d="M2 166c3-5 9-5 12-1 3-6 11-6 14-1 4-4 10-2 11 4l-.5 11H2z" fill="#9db182"/><path d="M68 168c3-5 9-5 12-1 3-6 10-7 13-2 3-4 8-4 9-1v15H67z" fill="#a0b486"/><path d="M2 170c4-3 9-2 11 2l-1 7H2z" fill="#8faa86"/><path d="M51.2 15.0 51.2 66.8" fill="none" stroke="#7d766a" stroke-width="0.9"/><path d="M51.2 14.2 51.2 20.8" fill="none" stroke="#d9674e" stroke-width="1.1"/><path d="M13.2 28.8 13.2 46.2" fill="none" stroke="#8d8475" stroke-width="0.6"/><path d="M27.0 28.8 27.0 36.8" fill="none" stroke="#8d8475" stroke-width="0.6"/><path d="M12.0 50.0 12.0 55.0" fill="none" stroke="#8d8475" stroke-width="0.6"/><path d="M21.2 46.2 21.2 50.8" fill="none" stroke="#8d8475" stroke-width="0.6"/><path d="M72.8 52.5 72.8 71.8" fill="none" stroke="#8d8475" stroke-width="0.6"/><path d="M30.2 83.8 30.2 93.8" fill="none" stroke="#8d8475" stroke-width="0.6"/><path d="M30.8 88.7 30.8 105.0" fill="none" stroke="#8d8475" stroke-width="0.6"/><path d="M83.2 102.5 83.2 118.2" fill="none" stroke="#8d8475" stroke-width="0.6"/><path d="M89.5 128.2 89.5 144.2" fill="none" stroke="#8d8475" stroke-width="0.6"/><path d="M53.2 26.2 60.8 29.2 70.8 28.8 85.8 25.0 96.2 20.0" fill="none" stroke="#e0775c" stroke-width="1" stroke-dasharray="1.3 2"/><path d="M50.8 68.8 56.2 73.2 54.0 80.0 47.8 85.8 51.2 93.2" fill="none" stroke="#e0775c" stroke-width="1" stroke-dasharray="1.2 2.2"/><path d="M17.0 115.7 43.2 110.0" fill="none" stroke="#e0775c" stroke-width="0.8" stroke-dasharray="1.2 2.6"/><path d="M57.8 111.7 77.0 115.0" fill="none" stroke="#e0775c" stroke-width="0.8" stroke-dasharray="1.2 2.6"/><path d="M51.2 93.7 51.2 138.7" fill="none" stroke="#e0775c" stroke-width="0.8" stroke-dasharray="1.2 3.6"/><path d="M48.8 111.7 51.2 106.7 53.8 111.7 z" fill="#dc6a50"/><path d="M49.8 126.2 51.2 123.2 52.8 126.2 z" fill="#e08468"/><path d="M21.2 7.5v2.8" stroke="#8a7a66" stroke-width=".5"/><ellipse cx="21.2" cy="7.5" rx="1.7" ry="1.8" fill="#8ab2a0"/><path d="M33.2 5.0v2.8" stroke="#8a7a66" stroke-width=".5"/><ellipse cx="33.2" cy="5.0" rx="1.7" ry="1.8" fill="#8ab2a0"/><path d="M42.8 4.2v2.8" stroke="#8a7a66" stroke-width=".5"/><ellipse cx="42.8" cy="4.2" rx="1.7" ry="1.8" fill="#8ab2a0"/><path d="M58.8 8.2v2.8" stroke="#8a7a66" stroke-width=".5"/><ellipse cx="58.8" cy="8.2" rx="1.7" ry="1.8" fill="#8ab2a0"/><path d="M94.5 5.8v2.8" stroke="#8a7a66" stroke-width=".5"/><ellipse cx="94.5" cy="5.8" rx="1.7" ry="1.8" fill="#8ab2a0"/><path d="M94.5 12.5v2.8" stroke="#8a7a66" stroke-width=".5"/><ellipse cx="94.5" cy="12.5" rx="1.7" ry="1.8" fill="#8ab2a0"/><path d="M89.5 16.8v2.8" stroke="#8a7a66" stroke-width=".5"/><ellipse cx="89.5" cy="16.8" rx="1.7" ry="1.8" fill="#8ab2a0"/><path d="M82.8 20.0v2.8" stroke="#8a7a66" stroke-width=".5"/><ellipse cx="82.8" cy="20.0" rx="1.7" ry="1.8" fill="#8ab2a0"/><path d="M46.2 25.0v2.8" stroke="#8a7a66" stroke-width=".5"/><ellipse cx="46.2" cy="25.0" rx="1.7" ry="1.8" fill="#8ab2a0"/><path d="M95.8 39.2v4.5" stroke="#8a7a66" stroke-width=".5"/><ellipse cx="95.8" cy="39.2" rx="2.6" ry="2.8" fill="#8ab2a0"/><path d="M17.8 60.8v4.2" stroke="#8a7a66" stroke-width=".5"/><ellipse cx="17.8" cy="60.8" rx="2.5" ry="2.6" fill="#8ab2a0"/><path d="M5.8 65.8v3.9" stroke="#8a7a66" stroke-width=".5"/><ellipse cx="5.8" cy="65.8" rx="2.3" ry="2.4" fill="#8ab2a0"/><path d="M42.0 60.8v3.6" stroke="#8a7a66" stroke-width=".5"/><ellipse cx="42.0" cy="60.8" rx="2.1" ry="2.2" fill="#8ab2a0"/><path d="M30.2 73.2v3.9" stroke="#8a7a66" stroke-width=".5"/><ellipse cx="30.2" cy="73.2" rx="2.3" ry="2.4" fill="#8ab2a0"/><path d="M22.0 77.5v3.3" stroke="#8a7a66" stroke-width=".5"/><ellipse cx="22.0" cy="77.5" rx="1.9" ry="2.0" fill="#8ab2a0"/><path d="M10.2 85.0v3.6" stroke="#8a7a66" stroke-width=".5"/><ellipse cx="10.2" cy="85.0" rx="2.1" ry="2.2" fill="#8ab2a0"/><path d="M93.2 64.5v4.5" stroke="#8a7a66" stroke-width=".5"/><ellipse cx="93.2" cy="64.5" rx="2.6" ry="2.8" fill="#8ab2a0"/><path d="M89.0 73.2v4.2" stroke="#8a7a66" stroke-width=".5"/><ellipse cx="89.0" cy="73.2" rx="2.5" ry="2.6" fill="#8ab2a0"/><path d="M97.0 82.5v3.6" stroke="#8a7a66" stroke-width=".5"/><ellipse cx="97.0" cy="82.5" rx="2.1" ry="2.2" fill="#8ab2a0"/><path d="M80.2 86.2v4.2" stroke="#8a7a66" stroke-width=".5"/><ellipse cx="80.2" cy="86.2" rx="2.5" ry="2.6" fill="#8ab2a0"/><path d="M63.2 90.0v5.4" stroke="#8a7a66" stroke-width=".5"/><ellipse cx="63.2" cy="90.0" rx="3.2" ry="3.3" fill="#8ab2a0"/><path d="M70.2 90.8v3.3" stroke="#8a7a66" stroke-width=".5"/><ellipse cx="70.2" cy="90.8" rx="1.9" ry="2.0" fill="#8ab2a0"/><path d="M14.5 101.2v4.2" stroke="#8a7a66" stroke-width=".5"/><ellipse cx="14.5" cy="101.2" rx="2.5" ry="2.6" fill="#8ab2a0"/><path d="M39.5 93.2v3.3" stroke="#8a7a66" stroke-width=".5"/><ellipse cx="39.5" cy="93.2" rx="1.9" ry="2.0" fill="#8ab2a0"/><path d="M63.2 91.2v6.0" stroke="#8a7a66" stroke-width=".5"/><ellipse cx="63.2" cy="91.2" rx="3.5" ry="3.7" fill="#8ab2a0"/><path d="M90.8 92.5v4.5" stroke="#8a7a66" stroke-width=".5"/><ellipse cx="90.8" cy="92.5" rx="2.6" ry="2.8" fill="#8ab2a0"/><path d="M70.2 90.0v3.0" stroke="#8a7a66" stroke-width=".5"/><ellipse cx="70.2" cy="90.0" rx="1.8" ry="1.8" fill="#8ab2a0"/><ellipse cx="65.8" cy="18.0" rx="1.5" ry="2.4" fill="#d2493a"/><ellipse cx="44.5" cy="18.8" rx="1.600" ry="1.400" fill="#7aa0a8"/><ellipse cx="62.0" cy="59.2" rx="2.200" ry="1.300" fill="#c8643c"/><ellipse cx="12.0" cy="120.0" rx="5.200" ry="2.500" fill="#78aaa6" transform="rotate(-18 12.0 120.0)"/><ellipse cx="24.5" cy="116.2" rx="5.200" ry="2.500" fill="#78aaa6" transform="rotate(-18 24.5 116.2)"/><ellipse cx="81.2" cy="119.2" rx="4" ry="2" fill="#a89c80"/><path d="M27.8 151.7 32.0 144.2 33.8 149.9 z" fill="#ea8c5e"/><path d="M29.5 156.2 33.8 149.7 34.8 154.2 z" fill="#ea8c5e"/><path d="M71.2 154.2 73.8 145.7 77.0 155.2 z" fill="#ea8c5e"/><ellipse cx="54.3" cy="176" rx="8" ry="2" fill="#d8ccb8" opacity=".8"/><ellipse cx="51.3" cy="144.300" rx="3.500" ry="3.600" fill="#7a4a32"/><rect x="50.1" y="146.500" width="2.400" height="2.600" fill="#dcae94"/><rect x="46.6" y="148.800" width="9.400" height="11.400" rx="2.200" fill="#72b0a0"/><rect x="47.8" y="160" width="7" height="5" rx=".8" fill="#4a6c56"/><rect x="48.3" y="165" width="1.900" height="6.400" fill="#dcae94"/><rect x="52.4" y="165" width="1.900" height="6.400" fill="#dcae94"/><rect x="45.9" y="159" width="1.500" height="3" fill="#dcae94"/><rect x="55.2" y="159" width="1.500" height="3" fill="#dcae94"/><rect x="47.8" y="171.200" width="2.600" height="1.600" rx=".6" fill="#6a86a6"/><rect x="52.2" y="171.200" width="2.600" height="1.600" rx=".6" fill="#6a86a6"/></g></g>
<rect x="1.250" y="1.250" width="100.700" height="177.500" fill="none" stroke="#f9e9cf" stroke-width="2.500"/></svg>
<div class="a" style="left:76.8px;top:60.3px;width:7px;height:7px;border-radius:50%;background:#d2472a"></div>
<svg class="a" style="left:78.6px;top:62px" width="3.6" height="3.6" viewBox="0 0 3.6 3.6"><circle cx="1.5" cy="1.8" r="1.3" fill="none" stroke="#fbe3dc" stroke-width=".6"/><path d="M1.500 1.800h2v1.200a1.400 1.400 0 0 1-1.200.3z" fill="#f3b6a6"/></svg>
<svg class="a tx" style="left:89.6px;top:56.70px" width="29.3" height="15"><text x="0" y="9.05" font-size="5" textLength="29.3" lengthAdjust="spacingAndGlyphs" style="fill:#4a4a4a">Автозбереження</text></svg>
<div class="a" style="left:121.4px;top:60px;width:15.6px;height:7.6px;background:#fff;border:.6px solid #a4a4a4;border-radius:4px"></div>
<div class="a" style="left:123px;top:61.6px;width:4.4px;height:4.4px;background:#5a5a5a;border-radius:50%"></div>
<svg class="a" style="left:140.7px;top:60.8px" width="6.4" height="6.4" viewBox="0 0 6.4 6.4"><path d="M.4.9a.5.5 0 0 1 .5-.5h4.200l.9.9v4.200a.5.5 0 0 1-.5.5H.9a.5.5 0 0 1-.5-.5z" fill="#b247c4"/><rect x="1.500" y=".4" width="3" height="2" fill="#f0d8f4"/><rect x="1.300" y="3.700" width="3.600" height="2.300" fill="#e9c8ee"/></svg>
<svg class="a" style="left:150.8px;top:60.6px" width="6.5" height="6.5" viewBox="0 0 6.5 6.5"><path d="M1 1v2.500h2.500M1.200 3.300C2.400 1.500 5.400 1.500 5.600 3.800 5.600 5 4.800 5.600 3.400 6.200" fill="none" stroke="#555" stroke-width=".8"/></svg>
<svg class="a" style="left:158.9px;top:63.3px" width="2.8" height="1.8" viewBox="0 0 2.8 1.8"><path d="M.3.3 1.4 1.4 2.5.3" fill="none" stroke="#777" stroke-width=".55"/></svg>
<svg class="a" style="left:164.6px;top:60.6px" width="6.5" height="6.5" viewBox="0 0 6.5 6.5"><path d="M5.300 2.200A2.500 2.500 0 1 0 5.800 3.800" fill="none" stroke="#b0b0b0" stroke-width=".7"/><path d="M4 .6 5.500 2.300 3.800 2.900" fill="none" stroke="#b0b0b0" stroke-width=".6"/></svg>
<svg class="a" style="left:174.8px;top:60.4px" width="6.4" height="7" viewBox="0 0 6.4 7"><path d="M1.200.8h4v2.400a2 2 0 0 1-4 0zM3.200 5.200v1M1.800 6.400h2.800M1.200 1.500H.4v.8a1 1 0 0 0 .9.900M5.200 1.500h.8v.8a1 1 0 0 1-.9.900" fill="none" stroke="#666" stroke-width=".6"/><rect x="2.400" y="1.200" width="1.600" height="1.600" fill="#3a9a4a"/></svg>
<svg class="a" style="left:186.4px;top:62.4px" width="3.2" height="3" viewBox="0 0 3.2 3"><path d="M.3.400h2.600M.5 1.500 1.600 2.600 2.700 1.500" fill="none" stroke="#666" stroke-width=".5"/></svg>
<svg class="a tx" style="left:197.9px;top:55.70px" width="56.4" height="17.4"><text x="0" y="10.50" font-size="5.8" textLength="56.4" lengthAdjust="spacingAndGlyphs" style="fill:#3c3c3c">Зорово-просторова орієн...</text></svg>
<svg class="a tx" style="left:257.9px;top:55.70px" width="44" height="17.4"><text x="0" y="10.50" font-size="5.8" textLength="44" lengthAdjust="spacingAndGlyphs" style="fill:#3c3c3c">• Збережено у цей ПК</text></svg>
<svg class="a" style="left:304.2px;top:63.6px" width="2.8" height="1.8" viewBox="0 0 2.8 1.8"><path d="M.3.3 1.4 1.4 2.5.3" fill="none" stroke="#555" stroke-width=".55"/></svg>
<div class="a" style="left:319.7px;top:58.4px;width:132.5px;height:10.7px;background:#fbfbfc;border-radius:1.5px;box-shadow:0 0 .8px rgba(0,0,0,.3)"></div>
<svg class="a" style="left:324.6px;top:61px" width="5.5" height="5.5" viewBox="0 0 5.5 5.5"><circle cx="3.300" cy="2.200" r="1.700" fill="none" stroke="#666" stroke-width=".6"/><path d="M2.100 3.500.5 5.100" stroke="#666" stroke-width=".6"/></svg>
<svg class="a tx" style="left:334.3px;top:55.15px" width="15.4" height="17.7"><text x="0" y="10.68" font-size="5.9" textLength="15.4" lengthAdjust="spacingAndGlyphs" style="fill:#777">Пошук</text></svg>
<div class="a" style="left:562.8px;top:59.2px;width:9.2px;height:9.2px;background:#d8591c;border-radius:50%"></div>
<svg class="a tx" style="left:564.6px;top:58.40px" width="7.2" height="10.8"><text x="0" y="6.52" font-size="3.6" textLength="5.6" lengthAdjust="spacingAndGlyphs" style="fill:#fbe6da">ЮЮ</text></svg>
<svg class="a" style="left:580px;top:60px" width="44" height="8" viewBox="0 0 44 8"><g fill="none" stroke="#555" stroke-width=".65"><path d="M2.800 3.500h3.600"/><rect x="20.200" y="2.200" width="3" height="3" rx=".5"/><path d="M21.200 2.200v-.8h3v3h-.9"/><path d="M37.600 1.800l3.400 3.400M41 1.800l-3.400 3.400"/></g></svg>
<svg class="a tx" style="left:77.1px;top:69.65px" width="11.8" height="17.7"><text x="0" y="10.68" font-size="5.9" textLength="11.8" lengthAdjust="spacingAndGlyphs" style="fill:#505050">Файл</text></svg>
<svg class="a tx" style="left:96.4px;top:69.65px" width="20" height="17.7"><text x="0" y="10.68" font-size="5.9" textLength="20" lengthAdjust="spacingAndGlyphs" style="fill:#1e1e1e;font-weight:bold">Основне</text></svg>
<div class="a" style="left:96.4px;top:81.9px;width:20px;height:1px;background:#c43e1c;border-radius:.5px"></div>
<svg class="a tx" style="left:124px;top:69.65px" width="25.6" height="17.7"><text x="0" y="10.68" font-size="5.9" textLength="25.6" lengthAdjust="spacingAndGlyphs" style="fill:#505050">Вставлення</text></svg>
<svg class="a tx" style="left:157.9px;top:69.65px" width="27.1" height="17.7"><text x="0" y="10.68" font-size="5.9" textLength="27.1" lengthAdjust="spacingAndGlyphs" style="fill:#505050">Малювання</text></svg>
<svg class="a tx" style="left:193.9px;top:69.65px" width="28.2" height="17.7"><text x="0" y="10.68" font-size="5.9" textLength="28.2" lengthAdjust="spacingAndGlyphs" style="fill:#505050">Конструктор</text></svg>
<svg class="a tx" style="left:231px;top:69.65px" width="22.1" height="17.7"><text x="0" y="10.68" font-size="5.9" textLength="22.1" lengthAdjust="spacingAndGlyphs" style="fill:#505050">Переходи</text></svg>
<svg class="a tx" style="left:261.9px;top:69.65px" width="19.5" height="17.7"><text x="0" y="10.68" font-size="5.9" textLength="19.5" lengthAdjust="spacingAndGlyphs" style="fill:#505050">Анімація</text></svg>
<svg class="a tx" style="left:290.4px;top:69.65px" width="31.5" height="17.7"><text x="0" y="10.68" font-size="5.9" textLength="31.5" lengthAdjust="spacingAndGlyphs" style="fill:#505050">Показ слайдів</text></svg>
<svg class="a tx" style="left:331px;top:69.65px" width="20.7" height="17.7"><text x="0" y="10.68" font-size="5.9" textLength="20.7" lengthAdjust="spacingAndGlyphs" style="fill:#505050">Записати</text></svg>
<svg class="a tx" style="left:359.3px;top:69.65px" width="31.7" height="17.7"><text x="0" y="10.68" font-size="5.9" textLength="31.7" lengthAdjust="spacingAndGlyphs" style="fill:#505050">Рецензування</text></svg>
<svg class="a tx" style="left:399.3px;top:69.65px" width="19.6" height="17.7"><text x="0" y="10.68" font-size="5.9" textLength="19.6" lengthAdjust="spacingAndGlyphs" style="fill:#505050">Подання</text></svg>
<svg class="a tx" style="left:427.1px;top:69.65px" width="17.9" height="17.7"><text x="0" y="10.68" font-size="5.9" textLength="17.9" lengthAdjust="spacingAndGlyphs" style="fill:#505050">Довідка</text></svg>
<svg class="a tx" style="left:453.6px;top:69.65px" width="17.4" height="17.7"><text x="0" y="10.68" font-size="5.9" textLength="17.4" lengthAdjust="spacingAndGlyphs" style="fill:#505050">Acrobat</text></svg>
<div class="a" style="left:505.3px;top:74px;width:30.4px;height:8.4px;background:#fdfdfd;border:.6px solid #c8c8c8;border-radius:1.5px"></div>
<svg class="a" style="left:507.2px;top:76.5px" width="3.4" height="3.4" viewBox="0 0 3.4 3.4"><circle cx="1.700" cy="1.700" r="1.400" fill="none" stroke="#444" stroke-width=".5"/><circle cx="1.700" cy="1.700" r=".7" fill="#444"/></svg>
<svg class="a tx" style="left:512.9px;top:69.75px" width="20.5" height="17.1"><text x="0" y="10.32" font-size="5.7" textLength="20.5" lengthAdjust="spacingAndGlyphs" style="fill:#333">Записати</text></svg>
<div class="a" style="left:538.6px;top:74px;width:59.7px;height:8.4px;background:#fdfdfd;border:.6px solid #c8c8c8;border-radius:1.5px"></div>
<svg class="a" style="left:540.8px;top:76.2px" width="4.2" height="4" viewBox="0 0 4.2 4"><rect x=".2" y=".8" width="2.600" height="2.600" fill="#444"/><circle cx="3.200" cy="1.400" r=".8" fill="#555"/><rect x="2.600" y="2.200" width="1.400" height="1.500" fill="#555"/></svg>
<svg class="a tx" style="left:546.1px;top:69.75px" width="50.6" height="17.1"><text x="0" y="10.32" font-size="5.7" textLength="50.6" lengthAdjust="spacingAndGlyphs" style="fill:#333">Презентувати в Teams</text></svg>
<div class="a" style="left:601.9px;top:74px;width:7.6px;height:8.4px;background:#fdfdfd;border:.6px solid #c8c8c8;border-radius:1.5px"></div>
<svg class="a" style="left:603.5px;top:76.3px" width="4.4" height="4" viewBox="0 0 4.4 4"><path d="M.4.400h3.600v2.400H2l-.9.900v-.9H.4z" fill="none" stroke="#555" stroke-width=".5"/></svg>
<div class="a" style="left:612.9px;top:74px;width:11px;height:8.4px;background:#c8421f;border-radius:1.5px"></div>
<svg class="a" style="left:614.6px;top:76.2px" width="8" height="4.2" viewBox="0 0 8 4.2"><path d="M.5 3.600V1.800h1.100V.6h1.500v3z" fill="none" stroke="#fbe0d8" stroke-width=".5"/><path d="M5.400 1.800 6.200 2.600 7 1.800" fill="none" stroke="#fbe0d8" stroke-width=".5"/></svg>
<div class="a" style="left:75.5px;top:84px;width:549.6px;height:34.700px;background:#fcfcfd;border-radius:2.500px;box-shadow:0 .5px 1.600px rgba(0,0,0,.16)"></div>
<div class="a" style="left:116.4px;top:86.5px;width:0.6px;height:30px;background:#e6e6e6;"></div>
<div class="a" style="left:200px;top:86.5px;width:0.6px;height:30px;background:#e6e6e6;"></div>
<div class="a" style="left:279.3px;top:86.5px;width:0.6px;height:30px;background:#e6e6e6;"></div>
<div class="a" style="left:345.7px;top:86.5px;width:0.6px;height:30px;background:#e6e6e6;"></div>
<div class="a" style="left:375.7px;top:86.5px;width:0.6px;height:30px;background:#e6e6e6;"></div>
<div class="a" style="left:407.1px;top:86.5px;width:0.6px;height:30px;background:#e6e6e6;"></div>
<div class="a" style="left:481.4px;top:86.5px;width:0.6px;height:30px;background:#e6e6e6;"></div>
<div class="a" style="left:513.1px;top:86.5px;width:0.6px;height:30px;background:#e6e6e6;"></div>
<div class="a" style="left:545.4px;top:86.5px;width:0.6px;height:30px;background:#e6e6e6;"></div>
<div class="a" style="left:575.7px;top:86.5px;width:0.6px;height:30px;background:#e6e6e6;"></div>
<div class="a" style="left:607.6px;top:86.5px;width:0.6px;height:30px;background:#e6e6e6;"></div>
<svg class="a" style="left:84.3px;top:86.4px" width="11" height="11.2" viewBox="0 0 11 11.2"><rect x=".6" y="1.700" width="6.800" height="8.400" rx=".8" fill="#fdf4e6" stroke="#e8a24a" stroke-width=".9"/><rect x="2.400" y=".5" width="3.200" height="2" rx=".6" fill="#f6f6f6" stroke="#999" stroke-width=".5"/><rect x="5.200" y="4.800" width="4.800" height="6" rx=".5" fill="#fafafa" stroke="#8a8a8a" stroke-width=".7"/></svg>
<svg class="a tx" style="left:79.7px;top:93.95px" width="17.9" height="15.3"><text x="0" y="9.23" font-size="5.1" textLength="17.9" lengthAdjust="spacingAndGlyphs" style="fill:#4a4a4a">Вставити</text></svg>
<svg class="a" style="left:86.9px;top:106.1px" width="2.8" height="1.8" viewBox="0 0 2.8 1.8"><path d="M.3.3 1.4 1.4 2.5.3" fill="none" stroke="#777" stroke-width=".55"/></svg>
<svg class="a" style="left:101.4px;top:87.1px" width="4" height="4.6" viewBox="0 0 4 4.6"><path d="M1 .3 2.800 3.300M3 .3 1.200 3.300" stroke="#3a7bc8" stroke-width=".55" fill="none"/><circle cx=".9" cy="3.800" r=".6" fill="none" stroke="#3a7bc8" stroke-width=".5"/><circle cx="3.100" cy="3.800" r=".6" fill="none" stroke="#3a7bc8" stroke-width=".5"/></svg>
<svg class="a" style="left:100.8px;top:95.8px" width="5" height="5.4" viewBox="0 0 5 5.4"><rect x=".4" y=".4" width="2.800" height="3.600" rx=".4" fill="#fff" stroke="#888" stroke-width=".55"/><rect x="1.700" y="1.500" width="2.800" height="3.600" rx=".4" fill="#f2f2f2" stroke="#888" stroke-width=".55"/></svg>
<svg class="a" style="left:108.4px;top:97.7px" width="2.8" height="1.8" viewBox="0 0 2.8 1.8"><path d="M.3.3 1.4 1.4 2.5.3" fill="none" stroke="#777" stroke-width=".55"/></svg>
<svg class="a" style="left:101px;top:104.7px" width="5" height="5.2" viewBox="0 0 5 5.2"><path d="M3.400.400 4.700 1.600 3.400 3 2.200 1.800z" fill="#e8a24a"/><path d="M2.400 2.200.6 3.600 1.800 4.900 3.100 3z" fill="#c77a1c"/><path d="M.5 4.900h1.500" stroke="#888" stroke-width=".5"/></svg>
<svg class="a tx" style="left:81.1px;top:109.40px" width="23.9" height="13.2"><text x="0" y="7.96" font-size="4.4" textLength="23.9" lengthAdjust="spacingAndGlyphs" style="fill:#666">Буфер обміну</text></svg>
<svg class="a" style="left:112.4px;top:114.8px" width="2.6" height="2.6" viewBox="0 0 2.6 2.6"><path d="M.3.300h1.200M.3.300v1.200M.9.900l1.400 1.400M2.300 1.200v1.100H1.200" fill="none" stroke="#888" stroke-width=".4"/></svg>
<svg class="a" style="left:124px;top:86.4px" width="11.2" height="9.8" viewBox="0 0 11.2 9.8"><rect x="1.400" y="1.700" width="9.200" height="7.400" rx=".6" fill="#f1f1f1" stroke="#7d7d7d" stroke-width=".8"/><path d="M1.400 4.200h9.200M5.800 4.200v4.900" stroke="#7d7d7d" stroke-width=".7"/><path d="M2 .2v3.200M.4 1.800h3.200" stroke="#2f9e44" stroke-width=".8"/></svg>
<svg class="a tx" style="left:120px;top:93.65px" width="18.9" height="15.3"><text x="0" y="9.23" font-size="5.1" textLength="18.9" lengthAdjust="spacingAndGlyphs" style="fill:#4a4a4a">Створити</text></svg>
<svg class="a tx" style="left:121.7px;top:99.45px" width="12.6" height="15.3"><text x="0" y="9.23" font-size="5.1" textLength="12.6" lengthAdjust="spacingAndGlyphs" style="fill:#4a4a4a">слайд</text></svg>
<svg class="a" style="left:134.3px;top:106.5px" width="2.8" height="1.8" viewBox="0 0 2.8 1.8"><path d="M.3.3 1.4 1.4 2.5.3" fill="none" stroke="#777" stroke-width=".55"/></svg>
<svg class="a" style="left:156.1px;top:86.6px" width="10.6" height="10.4" viewBox="0 0 10.6 10.4"><rect x=".5" y=".7" width="8" height="6.600" rx=".5" fill="#ececec" stroke="#808080" stroke-width=".8"/><rect x="1.800" y="2" width="5.400" height="4" fill="#fff" stroke="#999" stroke-width=".4"/><circle cx="7" cy="6" r="2.200" fill="#e4f0fb" stroke="#3c8bd8" stroke-width=".7"/><path d="M8.600 7.600 10 9" stroke="#3c8bd8" stroke-width=".8"/></svg>
<svg class="a tx" style="left:151.1px;top:93.65px" width="20" height="15.3"><text x="0" y="9.23" font-size="5.1" textLength="20" lengthAdjust="spacingAndGlyphs" style="fill:#4a4a4a">Повторно</text></svg>
<svg class="a tx" style="left:141px;top:99.45px" width="40.4" height="15.3"><text x="0" y="9.23" font-size="5.1" textLength="40.4" lengthAdjust="spacingAndGlyphs" style="fill:#4a4a4a">використати слайди</text></svg>
<svg class="a" style="left:184px;top:86.1px" width="6" height="5.2" viewBox="0 0 6 5.2"><rect x=".3" y=".3" width="5.400" height="4.400" rx=".4" fill="#f4f4f4" stroke="#777" stroke-width=".6"/><rect x=".3" y=".3" width="5.400" height="1.500" fill="#8a8a8a"/></svg>
<svg class="a" style="left:192.1px;top:88px" width="2.8" height="1.8" viewBox="0 0 2.8 1.8"><path d="M.3.3 1.4 1.4 2.5.3" fill="none" stroke="#777" stroke-width=".55"/></svg>
<svg class="a" style="left:184px;top:95.4px" width="6" height="5.2" viewBox="0 0 6 5.2"><rect x=".3" y=".3" width="5.400" height="4.400" rx=".4" fill="#f4f4f4" stroke="#777" stroke-width=".6"/><rect x=".3" y=".3" width="5.400" height="1.500" fill="#3c8bd8"/></svg>
<svg class="a" style="left:184px;top:105.3px" width="6" height="5.2" viewBox="0 0 6 5.2"><rect x=".3" y=".3" width="5.400" height="4.400" rx=".4" fill="#f4f4f4" stroke="#777" stroke-width=".6"/><rect x=".3" y=".3" width="5.400" height="1.500" fill="#8a8a8a"/></svg>
<svg class="a" style="left:192.1px;top:107.2px" width="2.8" height="1.8" viewBox="0 0 2.8 1.8"><path d="M.3.3 1.4 1.4 2.5.3" fill="none" stroke="#777" stroke-width=".55"/></svg>
<svg class="a tx" style="left:152.1px;top:109.40px" width="12.2" height="13.2"><text x="0" y="7.96" font-size="4.4" textLength="12.2" lengthAdjust="spacingAndGlyphs" style="fill:#666">Слайди</text></svg>
<div class="a" style="left:203.3px;top:85.6px;width:56px;height:7.4px;background:#f0eff1;border-radius:1px"></div>
<svg class="a" style="left:254.6px;top:88.6px" width="2.8" height="1.8" viewBox="0 0 2.8 1.8"><path d="M.3.3 1.4 1.4 2.5.3" fill="none" stroke="#aaa" stroke-width=".55"/></svg>
<div class="a" style="left:260.3px;top:85.6px;width:16.1px;height:7.4px;background:#f0eff1;border-radius:1px"></div>
<svg class="a tx" style="left:262.3px;top:82.20px" width="9.6" height="14.4"><text x="0" y="8.69" font-size="4.8" textLength="4.6" lengthAdjust="spacingAndGlyphs" style="fill:#b0b0b0">28</text></svg>
<svg class="a" style="left:272.4px;top:88.6px" width="2.8" height="1.8" viewBox="0 0 2.8 1.8"><path d="M.3.3 1.4 1.4 2.5.3" fill="none" stroke="#aaa" stroke-width=".55"/></svg>
<svg class="a tx" style="left:207.4px;top:90.30px" width="10.8" height="16.2"><text x="0" y="9.77" font-size="5.4" text-anchor="middle" style="fill:#8a8a8a;font-weight:bold">Ж</text></svg>
<svg class="a tx" style="left:216.4px;top:90.30px" width="10.8" height="16.2"><text x="0" y="9.77" font-size="5.4" text-anchor="middle" style="fill:#8a8a8a;font-style:italic">К</text></svg>
<svg class="a tx" style="left:225.7px;top:90.30px" width="10.8" height="16.2"><text x="0" y="9.77" font-size="5.4" text-anchor="middle" style="fill:#8a8a8a;text-decoration:underline">П</text></svg>
<svg class="a tx" style="left:235px;top:90.30px" width="10.8" height="16.2"><text x="0" y="9.77" font-size="5.4" text-anchor="middle" style="fill:#8a8a8a">S</text></svg>
<svg class="a tx" style="left:243.6px;top:90.30px" width="10.8" height="16.2"><text x="0" y="9.77" font-size="5.4" text-anchor="middle" style="fill:#8a8a8a;text-decoration:line-through;font-size:4.300px">ab</text></svg>
<svg class="a tx" style="left:252.6px;top:90.30px" width="10.8" height="16.2"><text x="0" y="9.77" font-size="5.4" text-anchor="middle" style="fill:#8a8a8a">AV</text></svg>
<svg class="a" style="left:258.4px;top:97.7px" width="2.8" height="1.8" viewBox="0 0 2.8 1.8"><path d="M.3.3 1.4 1.4 2.5.3" fill="none" stroke="#aaa" stroke-width=".55"/></svg>
<svg class="a" style="left:204.2px;top:105px" width="6" height="6" viewBox="0 0 6 6"><path d="M1 3.800 3.800 1 5 2.200 2.200 5z" fill="none" stroke="#999" stroke-width=".5"/><path d="M.4 5.600h5" stroke="#bbb" stroke-width=".7"/></svg>
<svg class="a" style="left:211.8px;top:107.2px" width="2.8" height="1.8" viewBox="0 0 2.8 1.8"><path d="M.3.3 1.4 1.4 2.5.3" fill="none" stroke="#aaa" stroke-width=".55"/></svg>
<svg class="a tx" style="left:219.8px;top:99.10px" width="10.8" height="16.2"><text x="0" y="9.77" font-size="5.4" style="fill:#8a8a8a">A</text></svg>
<div class="a" style="left:219.6px;top:110.2px;width:4px;height:0.8px;background:#999;"></div>
<svg class="a" style="left:227px;top:107.2px" width="2.8" height="1.8" viewBox="0 0 2.8 1.8"><path d="M.3.3 1.4 1.4 2.5.3" fill="none" stroke="#aaa" stroke-width=".55"/></svg>
<svg class="a tx" style="left:233.4px;top:100.10px" width="10.4" height="15.6"><text x="0" y="9.41" font-size="5.2" style="fill:#9a9a9a">Aa</text></svg>
<svg class="a" style="left:241.4px;top:107.2px" width="2.8" height="1.8" viewBox="0 0 2.8 1.8"><path d="M.3.3 1.4 1.4 2.5.3" fill="none" stroke="#aaa" stroke-width=".55"/></svg>
<svg class="a tx" style="left:250.3px;top:99.00px" width="11.6" height="17.4"><text x="0" y="10.50" font-size="5.8" style="fill:#8a8a8a">A</text></svg>
<svg class="a tx" style="left:254.3px;top:101.10px" width="6" height="9"><text x="0" y="5.43" font-size="3" style="fill:#8a8a8a">^</text></svg>
<svg class="a tx" style="left:260.3px;top:100.40px" width="10" height="15"><text x="0" y="9.05" font-size="5" style="fill:#8a8a8a">A</text></svg>
<svg class="a tx" style="left:263.7px;top:101.10px" width="6" height="9"><text x="0" y="5.43" font-size="3" style="fill:#8a8a8a">˅</text></svg>
<svg class="a tx" style="left:269.5px;top:99.00px" width="11.6" height="17.4"><text x="0" y="10.50" font-size="5.8" style="fill:#8a8a8a">A</text></svg>
<svg class="a" style="left:272.5px;top:106.5px" width="3" height="3.6" viewBox="0 0 3 3.6"><path d="M.3 3.300 2.400.9" stroke="#8a8a8a" stroke-width=".6"/></svg>
<div class="a" style="left:247.2px;top:104.4px;width:0.5px;height:7px;background:#ddd;"></div>
<div class="a" style="left:266.7px;top:104.4px;width:0.5px;height:7px;background:#ddd;"></div>
<svg class="a tx" style="left:230.7px;top:109.40px" width="12.2" height="13.2"><text x="0" y="7.96" font-size="4.4" textLength="12.2" lengthAdjust="spacingAndGlyphs" style="fill:#666">Шрифт</text></svg>
<svg class="a" style="left:275.2px;top:114.8px" width="2.6" height="2.6" viewBox="0 0 2.6 2.6"><path d="M.3.300h1.200M.3.300v1.200M.9.900l1.400 1.400M2.300 1.200v1.100H1.200" fill="none" stroke="#888" stroke-width=".4"/></svg>
<svg class="a" style="left:283.7px;top:86.3px" width="5.4" height="4.8" viewBox="0 0 5.4 4.8"><circle cx=".6" cy="0.7" r=".45" fill="#8d8d8d"/><path d="M1.700 0.7h3.600" stroke="#8d8d8d" stroke-width=".5"/><circle cx=".6" cy="2.4" r=".45" fill="#8d8d8d"/><path d="M1.700 2.4h3.600" stroke="#8d8d8d" stroke-width=".5"/><circle cx=".6" cy="4.1" r=".45" fill="#8d8d8d"/><path d="M1.700 4.1h3.600" stroke="#8d8d8d" stroke-width=".5"/></svg>
<svg class="a" style="left:292.2px;top:88px" width="2.8" height="1.8" viewBox="0 0 2.8 1.8"><path d="M.3.3 1.4 1.4 2.5.3" fill="none" stroke="#aaa" stroke-width=".55"/></svg>
<svg class="a" style="left:298.7px;top:86.3px" width="5.4" height="4.8" viewBox="0 0 5.4 4.8"><circle cx=".6" cy="0.7" r=".45" fill="#8d8d8d"/><path d="M1.700 0.7h3.600" stroke="#8d8d8d" stroke-width=".5"/><circle cx=".6" cy="2.4" r=".45" fill="#8d8d8d"/><path d="M1.700 2.4h3.600" stroke="#8d8d8d" stroke-width=".5"/><circle cx=".6" cy="4.1" r=".45" fill="#8d8d8d"/><path d="M1.700 4.1h3.600" stroke="#8d8d8d" stroke-width=".5"/></svg>
<svg class="a" style="left:307.2px;top:88px" width="2.8" height="1.8" viewBox="0 0 2.8 1.8"><path d="M.3.3 1.4 1.4 2.5.3" fill="none" stroke="#aaa" stroke-width=".55"/></svg>
<svg class="a" style="left:314.3px;top:86.3px" width="5.4" height="4.8" viewBox="0 0 5.4 4.8"><path d="M2 0.6h3.200" stroke="#8d8d8d" stroke-width=".5"/><path d="M2 2.4h3.200" stroke="#8d8d8d" stroke-width=".5"/><path d="M2 4.2h3.200" stroke="#8d8d8d" stroke-width=".5"/><path d="M.8.300v4.200M.2 1 .8.300 1.400 1M.2 3.800.8 4.500 1.400 3.800" fill="none" stroke="#8d8d8d" stroke-width=".4"/></svg>
<svg class="a" style="left:321.6px;top:88px" width="2.8" height="1.8" viewBox="0 0 2.8 1.8"><path d="M.3.3 1.4 1.4 2.5.3" fill="none" stroke="#aaa" stroke-width=".55"/></svg>
<svg class="a" style="left:329.8px;top:86.3px" width="5.4" height="4.8" viewBox="0 0 5.4 4.8"><path d="M2 0.6h3.200" stroke="#8d8d8d" stroke-width=".5"/><path d="M2 2.4h3.200" stroke="#8d8d8d" stroke-width=".5"/><path d="M2 4.2h3.200" stroke="#8d8d8d" stroke-width=".5"/><path d="M.8.300v4.200M.2 1 .8.300 1.400 1M.2 3.800.8 4.500 1.400 3.800" fill="none" stroke="#8d8d8d" stroke-width=".4"/></svg>
<svg class="a" style="left:337.2px;top:88px" width="2.8" height="1.8" viewBox="0 0 2.8 1.8"><path d="M.3.3 1.4 1.4 2.5.3" fill="none" stroke="#aaa" stroke-width=".55"/></svg>
<svg class="a" style="left:284px;top:96px" width="5.4" height="4.8" viewBox="0 0 5.4 4.8"><path d="M0.2 0.6h5" stroke="#8d8d8d" stroke-width=".5"/><path d="M2 2.4h3.2" stroke="#8d8d8d" stroke-width=".5"/><path d="M0.2 4.2h5" stroke="#8d8d8d" stroke-width=".5"/><path d="M.2 1.800 1.200 2.400.2 3z" fill="#8d8d8d"/></svg>
<svg class="a" style="left:293.3px;top:96px" width="5.4" height="4.8" viewBox="0 0 5.4 4.8"><path d="M0.2 0.6h5" stroke="#8d8d8d" stroke-width=".5"/><path d="M2 2.4h3.2" stroke="#8d8d8d" stroke-width=".5"/><path d="M0.2 4.2h5" stroke="#8d8d8d" stroke-width=".5"/><path d="M.2 1.800 1.200 2.400.2 3z" fill="#8d8d8d"/></svg>
<svg class="a" style="left:303.3px;top:96px" width="5.4" height="4.8" viewBox="0 0 5.4 4.8"><path d="M.3 0.8h2M3.100 0.8h2" stroke="#b5b5b5" stroke-width=".5"/><path d="M.3 2.4h2M3.100 2.4h2" stroke="#b5b5b5" stroke-width=".5"/><path d="M.3 4h2M3.100 4h2" stroke="#b5b5b5" stroke-width=".5"/></svg>
<svg class="a" style="left:311.1px;top:97.7px" width="2.8" height="1.8" viewBox="0 0 2.8 1.8"><path d="M.3.3 1.4 1.4 2.5.3" fill="none" stroke="#aaa" stroke-width=".55"/></svg>
<svg class="a" style="left:329.3px;top:96px" width="5.4" height="4.8" viewBox="0 0 5.4 4.8"><rect x=".4" y=".4" width="4.400" height="3.800" fill="none" stroke="#8d8d8d" stroke-width=".5"/><path d="M1.400 1.600h2.400M1.400 2.800h2.400" stroke="#8d8d8d" stroke-width=".4"/></svg>
<svg class="a" style="left:337.2px;top:97.7px" width="2.8" height="1.8" viewBox="0 0 2.8 1.8"><path d="M.3.3 1.4 1.4 2.5.3" fill="none" stroke="#aaa" stroke-width=".55"/></svg>
<svg class="a" style="left:284px;top:105.5px" width="5.4" height="4.8" viewBox="0 0 5.4 4.8"><path d="M.2 0.5h5" stroke="#8d8d8d" stroke-width=".5"/><path d="M.2 1.8h3.4" stroke="#8d8d8d" stroke-width=".5"/><path d="M.2 3.1h5" stroke="#8d8d8d" stroke-width=".5"/><path d="M.2 4.4h3.4" stroke="#8d8d8d" stroke-width=".5"/></svg>
<svg class="a" style="left:293.3px;top:105.5px" width="5.4" height="4.8" viewBox="0 0 5.4 4.8"><path d="M0.2 0.5h5" stroke="#8d8d8d" stroke-width=".5"/><path d="M1 1.8h3.4" stroke="#8d8d8d" stroke-width=".5"/><path d="M0.2 3.1h5" stroke="#8d8d8d" stroke-width=".5"/><path d="M1 4.4h3.4" stroke="#8d8d8d" stroke-width=".5"/></svg>
<svg class="a" style="left:302.7px;top:105.5px" width="5.4" height="4.8" viewBox="0 0 5.4 4.8"><path d="M0.2 0.5h5" stroke="#8d8d8d" stroke-width=".5"/><path d="M1.8 1.8h3.4" stroke="#8d8d8d" stroke-width=".5"/><path d="M0.2 3.1h5" stroke="#8d8d8d" stroke-width=".5"/><path d="M1.8 4.4h3.4" stroke="#8d8d8d" stroke-width=".5"/></svg>
<svg class="a" style="left:311.9px;top:105.5px" width="5.4" height="4.8" viewBox="0 0 5.4 4.8"><path d="M.2 0.5h5" stroke="#8d8d8d" stroke-width=".5"/><path d="M.2 1.8h5" stroke="#8d8d8d" stroke-width=".5"/><path d="M.2 3.1h5" stroke="#8d8d8d" stroke-width=".5"/><path d="M.2 4.4h5" stroke="#8d8d8d" stroke-width=".5"/></svg>
<svg class="a" style="left:329.3px;top:105.5px" width="5.4" height="4.8" viewBox="0 0 5.4 4.8"><rect x=".3" y=".3" width="2.600" height="2" fill="#8d8d8d"/><rect x="1.600" y="1.700" width="3" height="2.400" fill="#b0b0b0" stroke="#8d8d8d" stroke-width=".4"/></svg>
<svg class="a" style="left:337.2px;top:107.2px" width="2.8" height="1.8" viewBox="0 0 2.8 1.8"><path d="M.3.3 1.4 1.4 2.5.3" fill="none" stroke="#aaa" stroke-width=".55"/></svg>
<div class="a" style="left:313.2px;top:85.8px;width:0.5px;height:6.4px;background:#ddd;"></div>
<div class="a" style="left:301.4px;top:95px;width:0.5px;height:7px;background:#ddd;"></div>
<svg class="a tx" style="left:304px;top:109.40px" width="11" height="13.2"><text x="0" y="7.96" font-size="4.4" textLength="11" lengthAdjust="spacingAndGlyphs" style="fill:#666">Абзац</text></svg>
<svg class="a" style="left:341.4px;top:114.8px" width="2.6" height="2.6" viewBox="0 0 2.6 2.6"><path d="M.3.300h1.200M.3.300v1.200M.9.900l1.400 1.400M2.300 1.200v1.100H1.200" fill="none" stroke="#888" stroke-width=".4"/></svg>
<svg class="a" style="left:355px;top:86px" width="11" height="10" viewBox="0 0 11 10"><rect x=".4" y=".4" width="7" height="6.400" fill="#fdfdfd" stroke="#666" stroke-width=".7"/><path d="M4.600 9.600 7.200 3.400 9.900 9.600M5.600 7.400h3.400" fill="none" stroke="#3c9ae0" stroke-width="1"/></svg>
<svg class="a tx" style="left:348.1px;top:92.75px" width="24" height="15.3"><text x="0" y="9.23" font-size="5.1" textLength="24" lengthAdjust="spacingAndGlyphs" style="fill:#4a4a4a">Малювання</text></svg>
<svg class="a" style="left:358.6px;top:105px" width="2.8" height="1.8" viewBox="0 0 2.8 1.8"><path d="M.3.3 1.4 1.4 2.5.3" fill="none" stroke="#777" stroke-width=".55"/></svg>
<svg class="a" style="left:386.4px;top:86px" width="10.8" height="10.4" viewBox="0 0 10.8 10.4"><circle cx="6.800" cy="3.800" r="3.200" fill="none" stroke="#666" stroke-width=".8"/><path d="M4.400 6.200.6 9.800" stroke="#666" stroke-width=".9"/></svg>
<svg class="a tx" style="left:378.9px;top:92.75px" width="25" height="15.3"><text x="0" y="9.23" font-size="5.1" textLength="25" lengthAdjust="spacingAndGlyphs" style="fill:#4a4a4a">Редагування</text></svg>
<svg class="a" style="left:389.6px;top:105px" width="2.8" height="1.8" viewBox="0 0 2.8 1.8"><path d="M.3.3 1.4 1.4 2.5.3" fill="none" stroke="#777" stroke-width=".55"/></svg>
<svg class="a" style="left:441.1px;top:88px" width="7.6" height="8" viewBox="0 0 7.6 8"><path d="M.6 .5h3.200l1.600 1.600v2.600" fill="none" stroke="#3c8bd8" stroke-width=".8"/><path d="M.6.500v5.600h2.200" fill="none" stroke="#3c8bd8" stroke-width=".8"/><rect x="3.600" y="4.400" width="3.400" height="3" rx=".5" fill="#e4f0fb" stroke="#3c8bd8" stroke-width=".7"/></svg>
<svg class="a tx" style="left:416.4px;top:93.95px" width="55.7" height="15.3"><text x="0" y="9.23" font-size="5.1" textLength="55.7" lengthAdjust="spacingAndGlyphs" style="fill:#4a4a4a">Створити файл Adobe PDF і</text></svg>
<svg class="a tx" style="left:410.7px;top:99.65px" width="67.2" height="15.3"><text x="0" y="9.23" font-size="5.1" textLength="67.2" lengthAdjust="spacingAndGlyphs" style="fill:#4a4a4a">надати до нього спільний доступ</text></svg>
<svg class="a tx" style="left:431.3px;top:109.40px" width="26.2" height="13.2"><text x="0" y="7.96" font-size="4.4" textLength="26.2" lengthAdjust="spacingAndGlyphs" style="fill:#666">Adobe Acrobat</text></svg>
<svg class="a" style="left:494.3px;top:86px" width="7.2" height="10.8" viewBox="0 0 7.2 10.8"><rect x="1.900" y=".3" width="3.400" height="6.600" rx="1.700" fill="#5b9fe0"/><path d="M.6 5.200a3 3 0 0 0 6 0M3.600 8.200v1.800" fill="none" stroke="#777" stroke-width=".6"/></svg>
<svg class="a tx" style="left:485px;top:93.95px" width="25" height="15.3"><text x="0" y="9.23" font-size="5.1" textLength="25" lengthAdjust="spacingAndGlyphs" style="fill:#4a4a4a">Надиктувати</text></svg>
<svg class="a" style="left:496.3px;top:106.4px" width="2.8" height="1.8" viewBox="0 0 2.8 1.8"><path d="M.3.3 1.4 1.4 2.5.3" fill="none" stroke="#777" stroke-width=".55"/></svg>
<svg class="a tx" style="left:492.5px;top:109.40px" width="10" height="13.2"><text x="0" y="7.96" font-size="4.4" textLength="10" lengthAdjust="spacingAndGlyphs" style="fill:#666">Голос</text></svg>
<svg class="a" style="left:525.7px;top:86.6px" width="10" height="10" viewBox="0 0 10 10"><rect x="1" y="1.600" width="6.400" height="8" rx=".5" fill="#f1f1f1" stroke="#c4c4c4" stroke-width=".7"/><path d="M5 3.400 8.800 .8 9.600 2 6 4.800z" fill="#e4e4e4" stroke="#c0c0c0" stroke-width=".5"/></svg>
<svg class="a tx" style="left:517px;top:93.95px" width="25" height="15.3"><text x="0" y="9.23" font-size="5.1" textLength="25" lengthAdjust="spacingAndGlyphs" style="fill:#bcbcbc">Делікатність</text></svg>
<svg class="a" style="left:528.2px;top:106.4px" width="2.8" height="1.8" viewBox="0 0 2.8 1.8"><path d="M.3.3 1.4 1.4 2.5.3" fill="none" stroke="#ccc" stroke-width=".55"/></svg>
<svg class="a tx" style="left:518.8px;top:109.40px" width="21.2" height="13.2"><text x="0" y="7.96" font-size="4.4" textLength="21.2" lengthAdjust="spacingAndGlyphs" style="fill:#666">Делікатність</text></svg>
<svg class="a" style="left:555.4px;top:86.6px" width="10.4" height="10.2" viewBox="0 0 10.4 10.2"><rect x=".3" y=".3" width="9.800" height="9.600" rx=".6" fill="#f0a58c"/><g fill="#fdf3ef"><rect x="1.800" y="1.800" width="2.600" height="2.600" rx=".5"/><rect x="5.900" y="1.800" width="2.600" height="2.600" rx=".5"/><rect x="1.800" y="5.800" width="2.600" height="2.600" rx=".5"/><rect x="5.900" y="5.800" width="2.600" height="2.600" rx=".5"/></g></svg>
<svg class="a tx" style="left:549.3px;top:93.65px" width="22.6" height="15.3"><text x="0" y="9.23" font-size="5.1" textLength="22.6" lengthAdjust="spacingAndGlyphs" style="fill:#4a4a4a">Надбудови</text></svg>
<svg class="a tx" style="left:550.8px;top:109.40px" width="19.2" height="13.2"><text x="0" y="7.96" font-size="4.4" textLength="19.2" lengthAdjust="spacingAndGlyphs" style="fill:#666">Надбудови</text></svg>
<svg class="a" style="left:586.9px;top:86.6px" width="9.6" height="10.2" viewBox="0 0 9.6 10.2"><path d="M1.600 1.400C5 .2 8.800 1.800 8.600 5.200 8.400 8.400 5 9.800 1.600 8.600 3.600 7.400 3.600 2.800 1.600 1.400z" fill="#f1ecfd" stroke="#7b66e0" stroke-width=".7"/><path d="M1.600 8.600C4 6 6 5.400 8.500 5.400" fill="none" stroke="#a99af0" stroke-width=".6"/></svg>
<svg class="a tx" style="left:579px;top:93.65px" width="24.9" height="15.3"><text x="0" y="9.23" font-size="5.1" textLength="24.9" lengthAdjust="spacingAndGlyphs" style="fill:#4a4a4a">Конструктор</text></svg>
<svg class="a" style="left:617.8px;top:113.2px" width="4.4" height="2.8" viewBox="0 0 4.4 2.8"><path d="M.5.500 2.200 2.200 3.900.5" fill="none" stroke="#666" stroke-width=".6"/></svg>
</div></div>

<div class="a" style="left:-10px;top:357px;width:720px;height:24px;background:#1b1b1b;"></div>
<svg class="a" style="left:14.4px;top:360.3px;" width="8" height="9.4" viewBox="0 0 8 9.4"><rect x="2.500" y=".5" width="3" height="5" rx="1.500" fill="#8a8a8a"/><path d="M1.200 4.300a2.800 2.800 0 0 0 5.600 0M4 7.200v1.400M2.600 8.800h2.800" fill="none" stroke="#8a8a8a" stroke-width=".7"/><path d="M.2 8.200 7.800.8" stroke="#e0443c" stroke-width=".8"/></svg>
<svg class="a" style="left:33.9px;top:363.9px;" width="3.6" height="2.2" viewBox="0 0 3.6 2.2"><path d="M.3 1.900 1.800.4 3.300 1.900" fill="none" stroke="#bdbdbd" stroke-width=".7"/></svg>
<svg class="a tx" style="left:-1.6px;top:366.10px" width="39.9" height="20.4"><text x="0" y="12.31" font-size="6.8" textLength="39.9" lengthAdjust="spacingAndGlyphs" style="fill:#c9c9c9">Включить звук</text></svg>
<svg class="a" style="left:63.8px;top:361.8px;" width="11.4" height="6.8" viewBox="0 0 11.4 6.8"><rect x=".2" y=".3" width="7.600" height="6.200" rx="1.300" fill="#c9c9c9"/><path d="M8.300 2.500 11.200.8v5.200L8.300 4.300z" fill="#c9c9c9"/></svg>
<svg class="a" style="left:89px;top:363.9px;" width="3.6" height="2.2" viewBox="0 0 3.6 2.2"><path d="M.3 1.900 1.800.4 3.300 1.900" fill="none" stroke="#bdbdbd" stroke-width=".7"/></svg>
<svg class="a tx" style="left:45.4px;top:366.10px" width="47.6" height="20.4"><text x="0" y="12.31" font-size="6.8" textLength="47.6" lengthAdjust="spacingAndGlyphs" style="fill:#c9c9c9">Остановить видео</text></svg>
<svg class="a" style="left:145px;top:361.4px;" width="11.6" height="8.2" viewBox="0 0 11.6 8.2"><circle cx="4" cy="2.200" r="2" fill="#c9c9c9"/><path d="M.3 8v-1.500a2.600 2.600 0 0 1 2.600-2.600h2.200a2.600 2.600 0 0 1 2.600 2.600V8z" fill="#c9c9c9"/><circle cx="9" cy="3.200" r="1.500" fill="#c9c9c9"/><path d="M8.300 8V6.300a3 3 0 0 0-.6-1.500h2a1.800 1.800 0 0 1 1.800 1.800V8z" fill="#c9c9c9"/></svg>
<svg class="a tx" style="left:158.4px;top:355.90px" width="11.2" height="16.8"><text x="0" y="10.14" font-size="5.6" textLength="5.2" lengthAdjust="spacingAndGlyphs" style="fill:#d0d0d0">12</text></svg>
<svg class="a" style="left:173.4px;top:363.9px;" width="3.6" height="2.2" viewBox="0 0 3.6 2.2"><path d="M.3 1.900 1.800.4 3.300 1.900" fill="none" stroke="#bdbdbd" stroke-width=".7"/></svg>
<svg class="a tx" style="left:137px;top:366.10px" width="28" height="20.4"><text x="0" y="12.31" font-size="6.8" textLength="28" lengthAdjust="spacingAndGlyphs" style="fill:#c9c9c9">Участники</text></svg>
<svg class="a" style="left:197.2px;top:361.2px;" width="9.6" height="8.6" viewBox="0 0 9.6 8.6"><path d="M1.500.3h6.600a1.200 1.200 0 0 1 1.200 1.200v3.800a1.200 1.200 0 0 1-1.200 1.200H4.200L1.800 8.400V6.500h-.3A1.200 1.200 0 0 1 .3 5.300V1.500A1.200 1.200 0 0 1 1.500.3z" fill="#c9c9c9"/></svg>
<svg class="a" style="left:215.3px;top:363.9px;" width="3.6" height="2.2" viewBox="0 0 3.6 2.2"><path d="M.3 1.900 1.800.4 3.300 1.900" fill="none" stroke="#bdbdbd" stroke-width=".7"/></svg>
<svg class="a tx" style="left:196.8px;top:366.10px" width="13.6" height="20.4"><text x="0" y="12.31" font-size="6.8" textLength="10.6" lengthAdjust="spacingAndGlyphs" style="fill:#c9c9c9">Чат</text></svg>
<div class="a" style="left:249.9px;top:361px;width:11.3px;height:8.6px;background:#23d85a;border-radius:1.500px"></div>
<svg class="a" style="left:253.3px;top:362.6px;" width="4.6" height="5.4" viewBox="0 0 4.6 5.4"><path d="M2.300.5v4.600M.5 2.300 2.300.5 4.100 2.300" fill="none" stroke="#123a1e" stroke-width=".9"/></svg>
<svg class="a tx" style="left:226.3px;top:366.10px" width="58.7" height="20.4"><text x="0" y="12.31" font-size="6.8" textLength="58.7" lengthAdjust="spacingAndGlyphs" style="fill:#2ad45e">Демонстрация экрана</text></svg>
<svg class="a" style="left:302.4px;top:360.6px;" width="9.6" height="9.8" viewBox="0 0 9.6 9.8"><path d="M1.300.4h4.900l2.900 2.900v5a1.200 1.200 0 0 1-1.200 1.200H1.300A1.200 1.200 0 0 1 .3 8.300V1.400A1.200 1.200 0 0 1 1.300.4z" fill="#a8a8a8"/><path d="M6.200.4v2.900h2.900z" fill="#e4e4e4"/><path d="M4 4.200 4.700 6 6.500 6.600 4.700 7.200 4 9 3.300 7.200 1.500 6.600 3.300 6z" fill="#333"/></svg>
<svg class="a tx" style="left:297.2px;top:366.10px" width="19.1" height="20.4"><text x="0" y="12.31" font-size="6.8" textLength="19.1" lengthAdjust="spacingAndGlyphs" style="fill:#c9c9c9">Сводка</text></svg>
<svg class="a" style="left:341px;top:360.2px;" width="11.6" height="11" viewBox="0 0 11.6 11"><path d="M5 1.500 6.400 5.200 10 6.500 6.400 7.800 5 11.500 3.600 7.800 0 6.500 3.600 5.200z" fill="#c9c9c9" transform="translate(0 -1)"/><path d="M9.600.2l.5 1.300 1.300.5-1.300.5-.5 1.300-.5-1.300L7.800 2l1.300-.5z" fill="#c9c9c9"/></svg>
<svg class="a tx" style="left:329.2px;top:366.10px" width="36" height="20.4"><text x="0" y="12.31" font-size="6.8" textLength="36" lengthAdjust="spacingAndGlyphs" style="fill:#c9c9c9">AI Companion</text></svg>
<svg class="a" style="left:382.4px;top:360.6px;" width="9.8" height="9.8" viewBox="0 0 9.8 9.8"><circle cx="4.900" cy="4.900" r="4.300" fill="none" stroke="#c9c9c9" stroke-width=".8"/><circle cx="4.900" cy="4.900" r="2.900" fill="#a6a6a6"/></svg>
<svg class="a tx" style="left:378.2px;top:366.10px" width="18.2" height="20.4"><text x="0" y="12.31" font-size="6.8" textLength="18.2" lengthAdjust="spacingAndGlyphs" style="fill:#c9c9c9">Запись</text></svg>
<svg class="a" style="left:420px;top:360.6px;" width="10.6" height="9.8" viewBox="0 0 10.6 9.8"><circle cx="4.600" cy="5.300" r="4.100" fill="#c9c9c9"/><circle cx="3.200" cy="4.400" r=".6" fill="#222"/><circle cx="6" cy="4.400" r=".6" fill="#222"/><path d="M2.700 6.300a2.200 2.200 0 0 0 3.800 0" fill="none" stroke="#222" stroke-width=".6"/><path d="M9.200.2v2.600M7.900 1.500h2.600" stroke="#c9c9c9" stroke-width=".7"/></svg>
<svg class="a tx" style="left:413.6px;top:366.10px" width="21.6" height="20.4"><text x="0" y="12.31" font-size="6.8" textLength="21.6" lengthAdjust="spacingAndGlyphs" style="fill:#c9c9c9">Реакции</text></svg>
<svg class="a" style="left:459.6px;top:361.2px;" width="8.6" height="8.6" viewBox="0 0 8.6 8.6"><g fill="none" stroke="#c9c9c9" stroke-width=".8"><path d="M3.200.5H1.700A1.200 1.200 0 0 0 .5 1.700v1.500M5.400.5h1.500M.5 5.400v1.500a1.200 1.200 0 0 0 1.200 1.200h1.500M8.100 5.400v1.500a1.200 1.200 0 0 1-1.200 1.200H5.400"/><circle cx="6.900" cy="1.900" r="1.300"/></g></svg>
<svg class="a tx" style="left:447.3px;top:366.10px" width="33.7" height="20.4"><text x="0" y="12.31" font-size="6.8" textLength="33.7" lengthAdjust="spacingAndGlyphs" style="fill:#c9c9c9">Приложения</text></svg>
<svg class="a" style="left:507px;top:361.2px;" width="10.4" height="8.4" viewBox="0 0 10.4 8.4"><rect x=".5" y=".5" width="9" height="6" rx="1.200" fill="none" stroke="#c9c9c9" stroke-width=".8"/><rect x="5.800" y="5.400" width="4.400" height="2.400" rx=".6" fill="#c9c9c9"/><path d="M1.800 7.800h3.400" stroke="#c9c9c9" stroke-width=".7"/></svg>
<svg class="a tx" style="left:488px;top:366.10px" width="48.3" height="20.4"><text x="0" y="12.31" font-size="6.8" textLength="48.3" lengthAdjust="spacingAndGlyphs" style="fill:#c9c9c9">Доски сообщений</text></svg>
<svg class="a" style="left:559px;top:360.6px;" width="8.4" height="9.8" viewBox="0 0 8.4 9.8"><path d="M1 .5h5.600a.8.800 0 0 1 .8.800v6.800H1.900A1.300 1.300 0 0 1 .5 6.800V1.300A.8.800 0 0 1 1 .5z" fill="none" stroke="#c9c9c9" stroke-width=".8"/><path d="M3 3h2.600v2H3z" fill="#c9c9c9"/><path d="M1.400 9.200h6.400" stroke="#c9c9c9" stroke-width=".8"/></svg>
<svg class="a tx" style="left:546px;top:366.10px" width="33.6" height="20.4"><text x="0" y="12.31" font-size="6.8" textLength="33.6" lengthAdjust="spacingAndGlyphs" style="fill:#c9c9c9">Примечания</text></svg>
<div class="a" style="left:605.8px;top:364.4px;width:1.4px;height:1.4px;background:#c9c9c9;border-radius:50%"></div>
<div class="a" style="left:609.2px;top:364.4px;width:1.4px;height:1.4px;background:#c9c9c9;border-radius:50%"></div>
<div class="a" style="left:612.6px;top:364.4px;width:1.4px;height:1.4px;background:#c9c9c9;border-radius:50%"></div>
<svg class="a tx" style="left:589.2px;top:366.10px" width="41.8" height="20.4"><text x="0" y="12.31" font-size="6.8" textLength="41.8" lengthAdjust="spacingAndGlyphs" style="fill:#c9c9c9">Дополнительно</text></svg>
<div class="a" style="left:671.2px;top:363px;width:30px;height:13.2px;background:#c02b2f;border-radius:3px"></div>
<svg class="a tx" style="left:676.6px;top:359.10px" width="18" height="21"><text x="0" y="12.67" font-size="7" textLength="18" lengthAdjust="spacingAndGlyphs" style="fill:#fff;font-weight:bold">Выйти</text></svg>

<div class="a" style="left:-10px;top:381px;width:720px;height:29px;background:#3b4038;"></div>
<div class="a" style="left:-10px;top:381px;width:27.2px;height:29px;background:#4b4a45;"></div>
<svg class="a" style="left:1.8px;top:386.6px;" width="8" height="8" viewBox="0 0 8 8"><g fill="#f4f4f4"><path d="M0 1.200 3.400.7v3.100H0zM3.900.6 8 0v3.800H3.900zM0 4.300h3.400v3.100L0 6.900zM3.900 4.300H8V8L3.900 7.400z"/></g></svg>
<div class="a" style="left:17.2px;top:382px;width:133px;height:28px;background:#f3f3f3;"></div>
<svg class="a" style="left:22px;top:386.4px;" width="7.6" height="7.6" viewBox="0 0 7.6 7.6"><circle cx="4.800" cy="2.900" r="2.300" fill="none" stroke="#444" stroke-width=".8"/><path d="M3.200 4.600.6 7.200" stroke="#444" stroke-width=".9"/></svg>
<svg class="a tx" style="left:35.6px;top:379.10px" width="21.6" height="23.4"><text x="0" y="14.12" font-size="7.8" textLength="21.6" lengthAdjust="spacingAndGlyphs" style="fill:#555">Пошук</text></svg>
<svg class="a" style="left:115.5px;top:383px;" width="33" height="16.5" viewBox="0 0 33 16.5"><g filter="url(#b2)"><path d="M1 3C6 4 11 7 13 11 9 11 4 8 1 3z" fill="#e0a030"/><path d="M32 3C27 4 22 7 20 11 24 11 29 8 32 3z" fill="#e0a030"/><path d="M3 5C7 6 10 8 12 11" stroke="#b87818" stroke-width=".7" fill="none"/><path d="M30 5C26 6 23 8 21 11" stroke="#b87818" stroke-width=".7" fill="none"/><ellipse cx="16.500" cy="9.500" rx="4.200" ry="5.500" fill="#c89a6a"/><ellipse cx="16.500" cy="7" rx="3.600" ry="2.800" fill="#a87848"/><circle cx="15" cy="6.800" r="1.100" fill="#f4e8c0"/><circle cx="18" cy="6.800" r="1.100" fill="#f4e8c0"/><ellipse cx="16.500" cy="11.500" rx="2.400" ry="3" fill="#e8d4b4"/><path d="M14.500 15.500h4" stroke="#e09020" stroke-width="1"/></g></svg>
<svg class="a" style="left:156.6px;top:386.4px;" width="10" height="8.4" viewBox="0 0 10 8.4"><g fill="none" stroke="#e4e4e4" stroke-width=".7"><rect x="2.400" y=".8" width="4.800" height="6.400"/><path d="M.6 2.200v3.600M9 2.800v3"/></g><rect x="8.500" y=".9" width="1" height="1" fill="#e4e4e4"/></svg>
<div class="a" style="left:174.8px;top:385.6px;width:0.6px;height:10px;background:#5c6058;"></div>
<svg class="a" style="left:186.2px;top:384.6px;" width="11.6" height="11.6" viewBox="0 0 11.6 11.6"><defs><linearGradient id="eg" x1="0" y1="0" x2="1" y2="1"><stop offset="0" stop-color="#35c1f1"/><stop offset=".5" stop-color="#1b9de2"/><stop offset="1" stop-color="#0c59a4"/></linearGradient></defs><circle cx="5.800" cy="5.800" r="5.400" fill="url(#eg)"/><path d="M1.500 8.500C3 11 8 11.600 10.400 8.600 8 9.800 5 8.600 5 6.200 5 4.600 6.600 4 7.600 4.600 6.800 2.600 2.400 2.600 1 6z" fill="#6fe07a" opacity=".85"/><ellipse cx="7.200" cy="6.400" rx="1.700" ry="1.500" fill="#3b4038"/></svg>
<div class="a" style="left:183px;top:398.2px;width:18.6px;height:1.8px;background:#9ee4ee;"></div>
<svg class="a" style="left:209.4px;top:385.2px;" width="11.6" height="10.4" viewBox="0 0 11.6 10.4"><rect x="3.600" y=".4" width="7.600" height="9.400" rx=".8" fill="#28a8ea"/><path d="M3.600 4.600h7.600v5.200H3.600z" fill="#0f78d4"/><path d="M3.600 4.600 7.400 7.400 11.200 4.600v5.200H3.600z" fill="#50d9ff" opacity=".8"/><rect x=".3" y="2.400" width="5.600" height="5.600" rx=".7" fill="#0a64b8"/><ellipse cx="3.100" cy="5.200" rx="1.500" ry="1.700" fill="none" stroke="#fff" stroke-width=".8"/></svg>
<svg class="a" style="left:232.6px;top:385px;" width="11" height="10.4" viewBox="0 0 11 10.4"><path d="M.4 1.800A.8.800 0 0 1 1.200 1h3.200l1 1.200h4.400a.8.800 0 0 1 .8.800v6.200a.8.800 0 0 1-.8.800H1.200a.8.800 0 0 1-.8-.8z" fill="#f4b830"/><rect x=".4" y="3.600" width="10.200" height="6.400" rx=".6" fill="#fcd55c"/><rect x="3" y="6.400" width="5" height="3.600" fill="#3c8ee0"/><rect x="3.900" y="7.400" width="3.200" height="1.400" fill="#d8ecff"/></svg>
<svg class="a" style="left:255.4px;top:384.6px;" width="11.6" height="11.6" viewBox="0 0 11.6 11.6"><ellipse cx="5.800" cy="5.800" rx="5" ry="5.400" fill="#e82430"/><ellipse cx="5.800" cy="5.800" rx="2.400" ry="3.700" fill="#3b4038"/></svg>
<div class="a" style="left:278.4px;top:384.8px;width:11.2px;height:11.2px;background:#101820;border-radius:2.500px"></div>
<svg class="a" style="left:279.8px;top:387.2px;" width="8.4" height="6.4" viewBox="0 0 8.4 6.4"><circle cx="2.800" cy="3.200" r="2.200" fill="none" stroke="#28b8e8" stroke-width="1.300"/><circle cx="5.600" cy="3.200" r="2.200" fill="none" stroke="#3cd87c" stroke-width="1.300"/></svg>
<div class="a" style="left:275px;top:398.2px;width:15.4px;height:1.8px;background:#9ee4ee;"></div>
<svg class="a" style="left:301.4px;top:384.4px;" width="13" height="12.6" viewBox="0 0 13 12.6"><path d="M5.600.5C2.800.5.700 2.400.7 5.100c0 1.500.6 2.800 1.700 3.700V11l2-1.400c.4.100.8.100 1.200.1 2.800 0 4.900-1.900 4.900-4.600S8.400.5 5.600.5z" fill="#7d5cd8"/><path d="M3.800 3.200c.6 2 1.600 3 3.600 3.800" stroke="#fff" stroke-width="1" fill="none"/><rect x="6.200" y="6.200" width="6.500" height="6" rx="1.500" fill="#e8382c"/></svg>
<svg class="a tx" style="left:308.8px;top:388.40px" width="7.2" height="10.8"><text x="0" y="6.52" font-size="3.6" textLength="4.4" lengthAdjust="spacingAndGlyphs" style="fill:#fff;font-weight:bold">320</text></svg>
<div class="a" style="left:298px;top:398.2px;width:15.6px;height:1.8px;background:#9ee4ee;"></div>
<svg class="a" style="left:324.6px;top:385.2px;" width="11.4" height="10.4" viewBox="0 0 11.4 10.4"><rect x="3.400" y=".4" width="7.600" height="9.600" rx=".7" fill="#e8eef8"/><path d="M6.500 2.400h3.300M6.500 4.400h3.300M6.500 6.400h3.300M6.500 8.400h3.300" stroke="#2b579a" stroke-width=".8"/><rect x=".3" y="2.200" width="6" height="6" rx=".7" fill="#2b579a"/><path d="M1.500 3.800 2.300 6.600 3.300 4.200 4.300 6.600 5.100 3.800" fill="none" stroke="#fff" stroke-width=".7"/></svg>
<div class="a" style="left:321.4px;top:398.2px;width:15.4px;height:1.8px;background:#9ee4ee;"></div>
<svg class="a" style="left:347.4px;top:384.6px;" width="11.8" height="11.8" viewBox="0 0 11.8 11.8"><circle cx="5.600" cy="5.600" r="5.300" fill="#e8443a"/><path d="M5.600 5.600 1 3A5.300 5.300 0 0 0 5 10.900z" fill="#2ea84f"/><path d="M5.600 5.600 5 10.900A5.300 5.300 0 0 0 10.200 3z" fill="#fbc11a"/><circle cx="5.600" cy="5.600" r="2.300" fill="#fff"/><circle cx="5.600" cy="5.600" r="1.800" fill="#4286f4"/><circle cx="8.600" cy="8.800" r="2.600" fill="#c8b8a0"/><circle cx="8.600" cy="8.200" r="1.200" fill="#f0dcc8"/></svg>
<div class="a" style="left:345px;top:398.2px;width:15.2px;height:1.8px;background:#9ee4ee;"></div>
<div class="a" style="left:370.4px;top:384.8px;width:11.4px;height:11.4px;background:#0b5cff;border-radius:50%"></div>
<svg class="a tx" style="left:372.6px;top:385.65px" width="7" height="9.9"><text x="0" y="5.97" font-size="3.3" textLength="7" lengthAdjust="spacingAndGlyphs" style="fill:#fff;font-weight:bold">zoom</text></svg>
<div class="a" style="left:368.4px;top:398.2px;width:17px;height:1.8px;background:#9ee4ee;"></div>
<div class="a" style="left:410.2px;top:385px;width:0.7px;height:11px;background:#5c6058;"></div>
<svg class="a tx" style="left:416px;top:380.55px" width="18.2" height="20.1"><text x="0" y="12.13" font-size="6.7" textLength="18.2" lengthAdjust="spacingAndGlyphs" style="fill:#e6e6e6">Адреса</text></svg>
<div class="a" style="left:436.3px;top:385.8px;width:107px;height:10.2px;background:#fff;"></div>
<div class="a" style="left:535.2px;top:385.8px;width:0.5px;height:10.2px;background:#c8c8c8;"></div>
<svg class="a" style="left:528.6px;top:389.4px;" width="4" height="2.8" viewBox="0 0 4 2.8"><path d="M.4.400 2 2.200 3.600.400" fill="none" stroke="#666" stroke-width=".6"/></svg>
<svg class="a" style="left:537.2px;top:388px;" width="5" height="5.6" viewBox="0 0 5 5.6"><path d="M3.900 1.300A2 2 0 1 0 4.500 3" fill="none" stroke="#333" stroke-width=".6"/><path d="M3.100.3h1.400v1.400" fill="none" stroke="#333" stroke-width=".5"/></svg>
<svg class="a" style="left:546.4px;top:388.8px;" width="5.6" height="3.4" viewBox="0 0 5.6 3.4"><path d="M.4 3 2.800.5 5.200 3" fill="none" stroke="#e8e8e8" stroke-width=".7"/></svg>
<div class="a" style="left:556.8px;top:387.2px;width:7px;height:7px;background:#1f6cf0;border-radius:50%"></div>
<svg class="a" style="left:567.4px;top:387.4px;" width="8.6" height="6.8" viewBox="0 0 8.6 6.8"><rect x="1.600" y=".4" width="6.600" height="4.400" fill="none" stroke="#e4e4e4" stroke-width=".7"/><path d="M3.400 6.200h3.200M.4 1.800v3.600" stroke="#e4e4e4" stroke-width=".7"/></svg>
<svg class="a" style="left:579.6px;top:387px;" width="6.2" height="7.6" viewBox="0 0 6.2 7.6"><rect x="1" y="1.600" width="4" height="4.200" rx=".8" fill="none" stroke="#e4e4e4" stroke-width=".7"/><path d="M2.200.400h1.600M2.200 7h1.600" stroke="#e4e4e4" stroke-width=".8"/><rect x="3.600" y="3" width="2.400" height="2" fill="#e4e4e4"/></svg>
<svg class="a" style="left:591.2px;top:386.6px;" width="5" height="8.4" viewBox="0 0 5 8.4"><rect x="1.200" y=".3" width="2.600" height="5.200" rx="1.300" fill="#f0f0f0"/><path d="M.4 4.600a2.100 2.100 0 0 0 4.200 0M2.500 6.800v1.300" fill="none" stroke="#e4e4e4" stroke-width=".6"/></svg>
<svg class="a" style="left:600.8px;top:387px;" width="8" height="7.6" viewBox="0 0 8 7.6"><rect x=".5" y=".5" width="6.600" height="5.600" fill="none" stroke="#e4e4e4" stroke-width=".8"/><rect x="2" y="2" width="2" height="1.600" fill="#e4e4e4"/><circle cx="6.200" cy="6.200" r="1.300" fill="#3c8cf0"/></svg>
<svg class="a" style="left:611.6px;top:388.6px;" width="7.4" height="4.4" viewBox="0 0 7.4 4.4"><rect x=".4" y="1" width="6.200" height="3" rx=".4" fill="#f0f0f0"/><path d="M.4.300h2" stroke="#e4e4e4" stroke-width=".6"/></svg>
<svg class="a" style="left:622.8px;top:387.4px;" width="8" height="6.6" viewBox="0 0 8 6.6"><path d="M.4 2.300h1.400L3.600.6v5.400L1.800 4.300H.4z" fill="none" stroke="#e4e4e4" stroke-width=".6"/><path d="M4.800 2a2 2 0 0 1 0 2.600M6 1a3.400 3.400 0 0 1 0 4.600" fill="none" stroke="#bdbdbd" stroke-width=".5"/></svg>
<svg class="a tx" style="left:635.6px;top:381.60px" width="12.4" height="18.6"><text x="0" y="11.22" font-size="6.2" textLength="10.8" lengthAdjust="spacingAndGlyphs" style="fill:#ececec">ENG</text></svg>
<svg class="a tx" style="left:658.6px;top:377.15px" width="12.8" height="18.9"><text x="0" y="11.40" font-size="6.3" textLength="12.8" lengthAdjust="spacingAndGlyphs" style="fill:#f0f0f0">11:11</text></svg>
<svg class="a tx" style="left:652px;top:385.85px" width="26.4" height="18.9"><text x="0" y="11.40" font-size="6.3" textLength="26.4" lengthAdjust="spacingAndGlyphs" style="fill:#f0f0f0">29.10.2024</text></svg>
<svg class="a" style="left:686px;top:386.2px;" width="9" height="8.8" viewBox="0 0 9 8.8"><path d="M.5.500h7.800v5.800H5.600L4.400 7.800 3.200 6.300H.5z" fill="none" stroke="#e8e8e8" stroke-width=".7"/></svg>

</div></div>
</body>
</html>
